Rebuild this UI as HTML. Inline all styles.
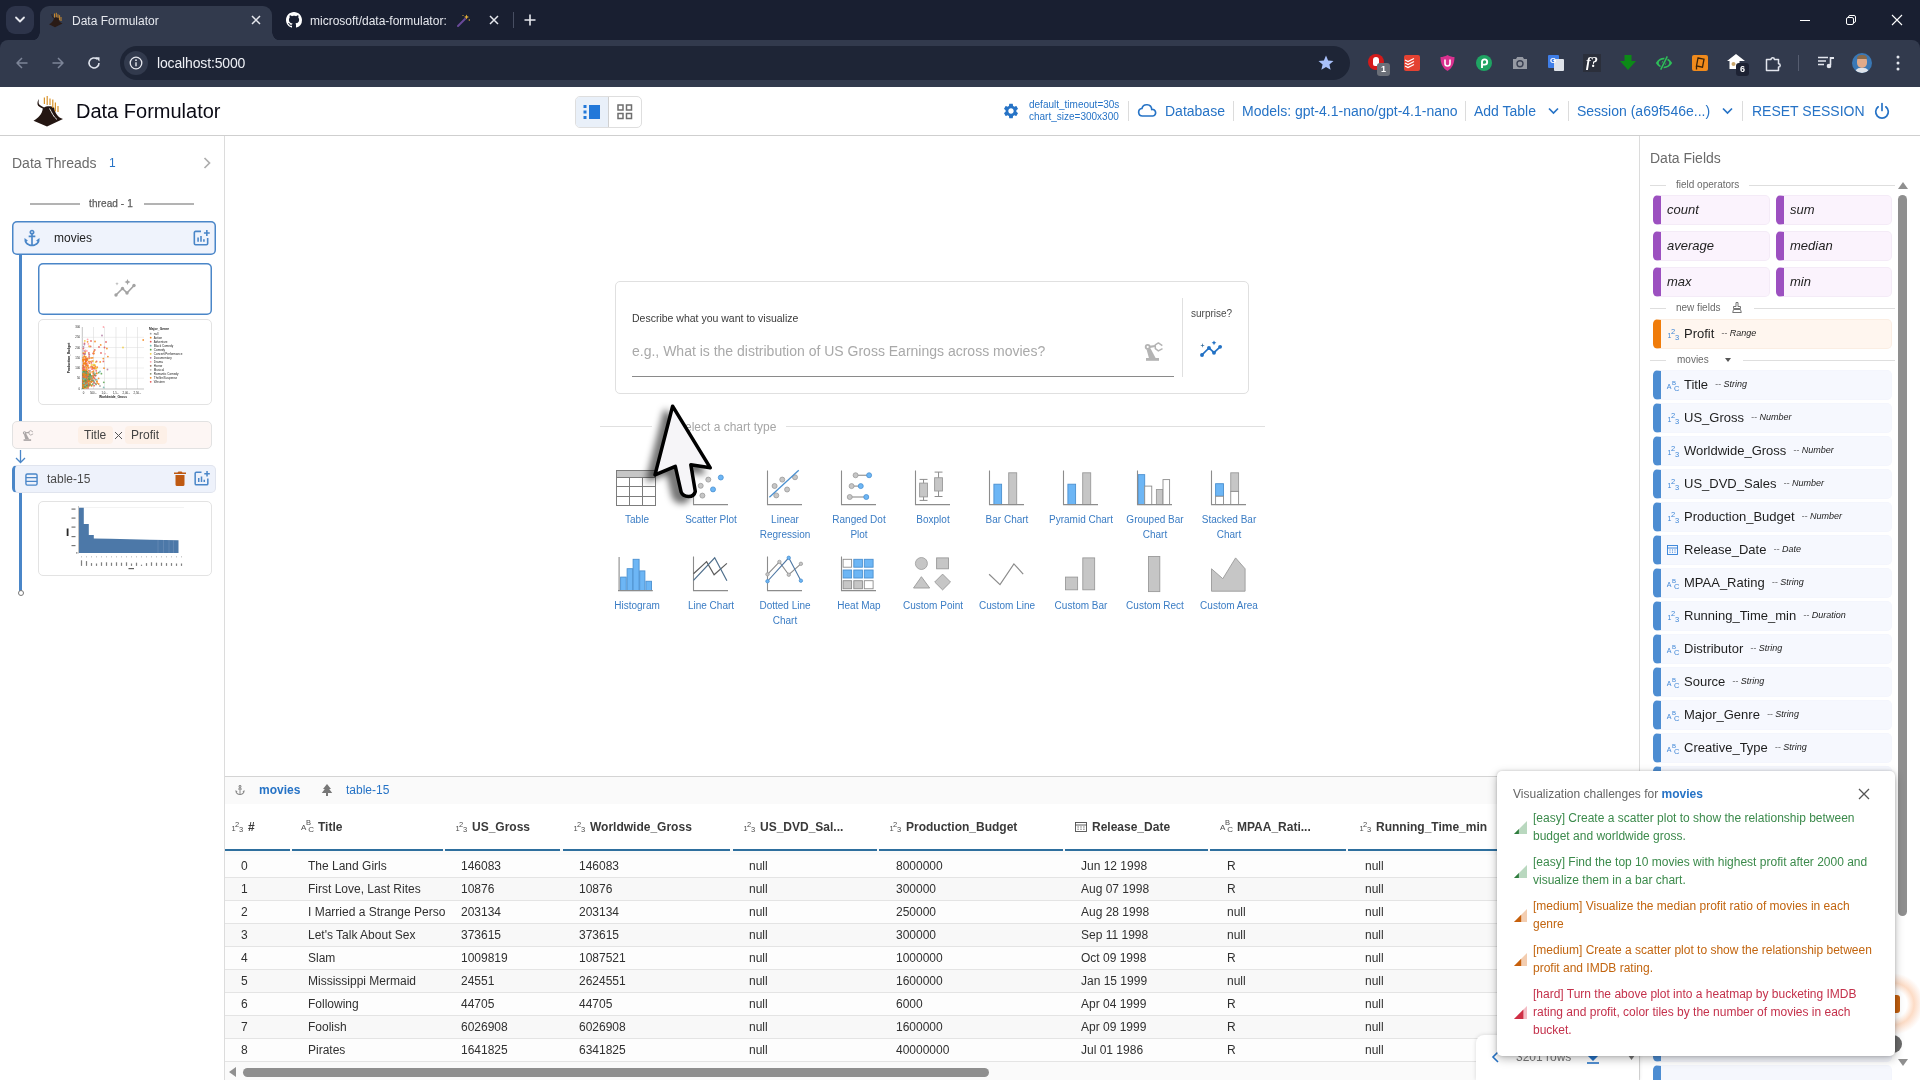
<!DOCTYPE html>
<html lang="en">
<head>
<meta charset="utf-8">
<title>Data Formulator</title>
<style>
*{box-sizing:border-box;margin:0;padding:0}
html,body{width:1920px;height:1080px;overflow:hidden;background:#fff;will-change:transform;font-family:"Liberation Sans",sans-serif;color:#222}
.a{position:absolute}
.t{position:absolute;white-space:nowrap}
svg{position:absolute;overflow:visible}
/* ---------- browser chrome ---------- */
#tabstrip{left:0;top:0;width:1920px;height:60px;background:#191f31}
#toolbar{left:0;top:40px;width:1920px;height:47px;background:#323a4d;border-radius:8px 8px 0 0}
#tab1{left:40px;top:6px;width:232px;height:35px;background:#323a4d;border-radius:9px 9px 0 0}
#tab1:before,#tab1:after{content:"";position:absolute;bottom:0;width:9px;height:9px}
#tab1:before{left:-9px;background:radial-gradient(circle at 0 0,rgba(0,0,0,0) 8.5px,#323a4d 9px)}
#tab1:after{right:-9px;background:radial-gradient(circle at 100% 0,rgba(0,0,0,0) 8.5px,#323a4d 9px)}
#tabsearch{left:6px;top:6px;width:28px;height:28px;border-radius:9px;background:#2d344a}
#urlbar{left:120px;top:46px;width:1230px;height:34px;border-radius:17px;background:#1e2536}
#infoc{left:124px;top:51px;width:24px;height:24px;border-radius:12px;background:#323a4d}
.ct{color:#e6e8ee;font-size:12px;line-height:16px}
/* ---------- app header ---------- */
#hdr{left:0;top:87px;width:1920px;height:49px;background:#fff;border-bottom:1px solid #cfcfcf}
.hb{color:#2673c6;font-size:14px;line-height:20px;top:101px}
.hdiv{width:1px;height:20px;top:101px;background:#dcdcdc}
/* ---------- panels ---------- */
#left{left:0;top:136px;width:225px;height:944px;background:#fff;border-right:1px solid #dcdcdc}
#right{left:1639px;top:136px;width:281px;height:944px;background:#fff;border-left:1px solid #dcdcdc}
#bottom{left:225px;top:776px;width:1414px;height:304px;background:#fafafa;border-top:1px solid #d4d4d4}
.cl{width:90px;text-align:center;font-size:10px;line-height:15px;color:#3a7cc4;white-space:normal}
</style>
</head>
<body>
<!-- ================= BROWSER CHROME ================= -->
<div class="a" id="tabstrip"></div>
<div class="a" id="toolbar"></div>
<div class="a" id="tabsearch"></div>
<svg style="left:14px;top:15px" width="12" height="10" viewBox="0 0 12 10"><path d="M2 2.5 L6 6.5 L10 2.5" fill="none" stroke="#e6e8ee" stroke-width="1.8" stroke-linecap="round" stroke-linejoin="round"/></svg>
<div class="a" id="tab1"></div>
<!-- tab 1 -->
<svg style="left:48px;top:12px" width="16" height="16" viewBox="0 0 16 16"><path d="M3.5 2 C3.5 5 5 6 6 6.5 C5.5 9 3.5 11 1 12.2 L7 15.2 L14.5 11.5 C11.5 10.5 10.6 8 10.5 6 C9.8 5.2 7 5 6.2 6 C5 5 4.2 4 4.2 2 Z" fill="#2a1b16"/><path d="M6.5 1.5v4M8.3 0.8v4.5M10 2.3v3.5M11.6 3.2v5M13 5v4" stroke="#d9922a" stroke-width="0.9" fill="none"/></svg>
<div class="t ct" style="left:72px;top:13px">Data Formulator</div>
<svg style="left:251px;top:15px" width="10" height="10" viewBox="0 0 10 10"><path d="M1 1L9 9M9 1L1 9" stroke="#e6e8ee" stroke-width="1.5" fill="none"/></svg>
<!-- tab 2 -->
<svg style="left:286px;top:12px" width="16" height="16" viewBox="0 0 16 16"><path fill="#fff" d="M8 0C3.58 0 0 3.58 0 8c0 3.54 2.29 6.53 5.47 7.59.4.07.55-.17.55-.38 0-.19-.01-.82-.01-1.49-2.01.37-2.53-.49-2.69-.94-.09-.23-.48-.94-.82-1.13-.28-.15-.68-.52-.01-.53.63-.01 1.08.58 1.23.82.72 1.21 1.87.87 2.33.66.07-.52.28-.87.51-1.07-1.78-.2-3.64-.89-3.64-3.95 0-.87.31-1.59.82-2.15-.08-.2-.36-1.02.08-2.12 0 0 .67-.21 2.2.82.64-.18 1.32-.27 2-.27s1.36.09 2 .27c1.53-1.04 2.2-.82 2.2-.82.44 1.1.16 1.92.08 2.12.51.56.82 1.27.82 2.15 0 3.07-1.87 3.75-3.65 3.95.29.25.54.73.54 1.48 0 1.07-.01 1.93-.01 2.2 0 .21.15.46.55.38A8.01 8.01 0 0016 8c0-4.42-3.58-8-8-8z"/></svg>
<div class="t ct" style="left:310px;top:13px">microsoft/data-formulator:</div>
<svg style="left:457px;top:13px" width="14" height="14" viewBox="0 0 14 14"><path d="M1 13L8 6" stroke="#6a4a9a" stroke-width="2" stroke-linecap="round"/><path d="M9.5 1.5l.7 1.8 1.8.7-1.8.7-.7 1.8-.7-1.800-1.800-.7 1.800-.7z" fill="#e8b23a"/><circle cx="12.300" cy="7" r=".7" fill="#e8b23a"/><circle cx="6" cy="2.500" r=".6" fill="#e8b23a"/></svg>
<svg style="left:489px;top:15px" width="10" height="10" viewBox="0 0 10 10"><path d="M1 1L9 9M9 1L1 9" stroke="#e6e8ee" stroke-width="1.500" fill="none"/></svg>
<div class="a" style="left:513px;top:12px;width:1px;height:16px;background:#474e62"></div>
<svg style="left:524px;top:14px" width="12" height="12" viewBox="0 0 12 12"><path d="M6 .5v11M.5 6h11" stroke="#e6e8ee" stroke-width="1.600" fill="none"/></svg>
<!-- window controls -->
<svg style="left:1800px;top:15px" width="10" height="10" viewBox="0 0 10 10"><path d="M0 5.500h10" stroke="#fff" stroke-width="1"/></svg>
<svg style="left:1846px;top:15px" width="10" height="10" viewBox="0 0 10 10"><rect x=".5" y="2.500" width="7" height="7" rx="1.500" fill="none" stroke="#fff" stroke-width="1"/><path d="M2.500 2.500V2a1.500 1.500 0 011.500-1.500h4A1.500 1.500 0 019.500 2v4A1.500 1.500 0 018 7.500h-.5" fill="none" stroke="#fff" stroke-width="1"/></svg>
<svg style="left:1892px;top:15px" width="10" height="10" viewBox="0 0 10 10"><path d="M0 0L10 10M10 0L0 10" stroke="#fff" stroke-width="1.100" fill="none"/></svg>
<!-- nav -->
<svg style="left:16px;top:57px" width="12" height="12" viewBox="0 0 12 12"><path d="M11.500 6H1M6 1L1 6l5 5" fill="none" stroke="#7d8598" stroke-width="1.500" stroke-linejoin="round"/></svg>
<svg style="left:52px;top:57px" width="12" height="12" viewBox="0 0 12 12"><path d="M.5 6H11M6 1l5 5-5 5" fill="none" stroke="#7d8598" stroke-width="1.500" stroke-linejoin="round"/></svg>
<svg style="left:87px;top:56px" width="14" height="14" viewBox="0 0 14 14"><path d="M12 7A5 5 0 1 1 10.300 3.200" fill="none" stroke="#dfe3ec" stroke-width="1.600"/><path d="M8.200 1.200h4.300v4.300z" fill="#dfe3ec"/></svg>
<!--CHROME-ICONS-->
<div class="a" id="urlbar"></div>
<div class="a" id="infoc"></div>
<svg style="left:129px;top:56px" width="14" height="14" viewBox="0 0 14 14"><circle cx="7" cy="7" r="5.800" fill="none" stroke="#e6e8ee" stroke-width="1.300"/><path d="M7 6.200v4" stroke="#e6e8ee" stroke-width="1.400"/><circle cx="7" cy="4.200" r=".9" fill="#e6e8ee"/></svg>
<div class="t" style="left:157px;top:53px;font-size:14px;line-height:20px;color:#eef0f5;letter-spacing:-.15px">localhost:5000</div>
<svg style="left:1317px;top:54px" width="18" height="18" viewBox="0 0 24 24"><path fill="#a8c0fa" d="M12 17.270L18.180 21l-1.640-7.030L22 9.240l-7.190-.61L12 2 9.190 8.630 2 9.240l5.460 4.730L5.820 21z"/></svg>
<!-- extensions -->
<div class="a" style="left:1368px;top:54px;width:16px;height:16px;border-radius:8px;background:#d41a1a"></div>
<div class="a" style="left:1373px;top:57px;width:6px;height:9px;border-radius:3px 3px 2px 2px;background:#fff"></div>
<div class="a" style="left:1377px;top:63px;width:13px;height:13px;border-radius:3px;background:#6b6f78;color:#fff;font-size:9px;font-weight:bold;line-height:13px;text-align:center">1</div>
<div class="a" style="left:1404px;top:55px;width:16px;height:16px;border-radius:2px;background:#e44232"></div>
<svg style="left:1405px;top:57px" width="12" height="12" viewBox="0 0 12 12"><path d="M0 3l3 1.500L9 1.500M0 6l3 1.500L9 4.500M0 9l3 1.500L9 7.500" fill="none" stroke="#fff" stroke-width="1.200"/></svg>
<svg style="left:1440px;top:55px" width="15" height="16" viewBox="0 0 15 16"><path d="M7.500 0C5 1.500 2.500 2 .5 2c0 6 2 11 7 14 5-3 7-8 7-14-2 0-4.500-.5-7-2z" fill="#d9318f"/><path d="M5 4.500v4a2.500 2.500 0 005 0v-4" fill="none" stroke="#fff" stroke-width="1.600"/></svg>
<div class="a" style="left:1476px;top:55px;width:16px;height:16px;border-radius:8px;background:#1fa463"></div>
<svg style="left:1476px;top:55px" width="16" height="16" viewBox="0 0 16 16"><path d="M6 13V7a2.600 2.600 0 112.600 2.600H6.500" fill="none" stroke="#fff" stroke-width="1.900"/></svg>
<svg style="left:1512px;top:56px" width="16" height="14" viewBox="0 0 16 14"><path d="M1 3h3l1.200-2h5.600L12 3h3v10H1z" fill="#9599a3"/><circle cx="8" cy="7.800" r="3" fill="none" stroke="#3a4052" stroke-width="1.400"/></svg>
<div class="a" style="left:1548px;top:55px;width:11px;height:13px;border-radius:1px;background:#3f7ee8"></div>
<div class="a" style="left:1554px;top:59px;width:10px;height:12px;border-radius:1px;background:#dfe3ea"></div>
<div class="t" style="left:1550px;top:56px;font-size:8px;line-height:10px;font-weight:bold;color:#fff">G</div>
<div class="a" style="left:1583px;top:54px;width:18px;height:18px;background:#2b2f3b"></div>
<div class="t" style="left:1586px;top:54px;font-family:'Liberation Serif',serif;font-style:italic;font-weight:bold;font-size:14px;line-height:18px;color:#fff">f?</div>
<svg style="left:1620px;top:55px" width="16" height="16" viewBox="0 0 16 16"><path d="M4.500 0h7v6H16l-8 9-8-9h4.500z" fill="#0c8a17"/></svg>
<svg style="left:1655px;top:56px" width="18" height="14" viewBox="0 0 18 14"><path d="M.8 7c2-3.400 5-5.200 8.200-5.200s6.200 1.800 8.200 5.200c-2 3.400-5 5.200-8.200 5.200S2.800 10.400.8 7z" fill="#2ebd59"/><ellipse cx="9" cy="7" rx="5.300" ry="3.400" fill="#323a4d"/><circle cx="9" cy="7" r="2.300" fill="#2ebd59"/><path d="M12.300 .3L5.700 13.700" stroke="#323a4d" stroke-width="3.200"/><path d="M12.300 .3L5.700 13.700" stroke="#2ebd59" stroke-width="1.500"/></svg>
<div class="a" style="left:1692px;top:55px;width:16px;height:16px;border-radius:2px;background:#f08a1c"></div>
<svg style="left:1695px;top:57px" width="11" height="13" viewBox="0 0 11 13"><path d="M3 1l6 1.200-1.500 8L1.500 9z" fill="none" stroke="#3a230a" stroke-width="1.300"/><path d="M1.500 9v3.500" stroke="#3a230a" stroke-width="1.300"/></svg>
<svg style="left:1727px;top:54px" width="18" height="16" viewBox="0 0 18 16"><path d="M9 0L0 7h2.500v8h10V7H18z" fill="#fff"/><circle cx="6.500" cy="10" r="2" fill="#c9a66b"/></svg>
<div class="a" style="left:1736px;top:63px;width:13px;height:13px;border-radius:3px;background:#1d2233;color:#fff;font-size:9px;font-weight:bold;line-height:13px;text-align:center">6</div>
<svg style="left:1764px;top:54px" width="18" height="18" viewBox="0 0 18 18"><path d="M2.500 5.500H7a1.700 1.700 0 013.400 0H14.500V9.700a1.700 1.700 0 010 3.400V16.500H2.500z" fill="none" stroke="#e3e6ee" stroke-width="1.500" stroke-linejoin="round"/></svg>
<div class="a" style="left:1798px;top:55px;width:1px;height:16px;background:#565d70"></div>
<svg style="left:1818px;top:56px" width="16" height="13" viewBox="0 0 16 13"><path d="M0 1.500h10M0 5h8M0 8.500h6" stroke="#e3e6ee" stroke-width="1.600"/><path d="M12.500 1v8" stroke="#e3e6ee" stroke-width="1.600"/><path d="M12.500 1h3.500v2h-3.500z" fill="#e3e6ee"/><circle cx="11" cy="10" r="2.300" fill="#e3e6ee"/></svg>
<div class="a" style="left:1852px;top:53px;width:20px;height:20px;border-radius:10px;background:#3a78b5;overflow:hidden"><div class="a" style="left:5px;top:3px;width:10px;height:12px;border-radius:5px;background:#e0aa8a"></div><div class="a" style="left:5px;top:2px;width:10px;height:4px;border-radius:5px 5px 0 0;background:#8a6a4a"></div><div class="a" style="left:3px;top:15px;width:14px;height:8px;border-radius:5px 5px 0 0;background:#dfe3ea"></div></div>
<svg style="left:1896px;top:55px" width="4" height="16" viewBox="0 0 4 16"><circle cx="2" cy="2" r="1.500" fill="#e3e6ee"/><circle cx="2" cy="8" r="1.500" fill="#e3e6ee"/><circle cx="2" cy="14" r="1.500" fill="#e3e6ee"/></svg>
<!--URL-ICONS-->

<!-- ================= APP HEADER ================= -->
<div class="a" id="hdr"></div>
<!-- logo -->
<svg style="left:32px;top:95px" width="32" height="32" viewBox="0 0 32 32"><path d="M6.500 4c-.4 1.500-1.300 3.200-1 5.200.3 2.300 3 3.200 5.300 4.300-.6 5.500-4.800 9.800-9.300 12.300L15 31.500 31 24c-5-1.200-8.200-6-8.800-11.200-1.600-2-8-2.200-10.200-.2-1.400-1.200-4.800-2-5.300-4.300-.3-1.300.2-2.700-.2-4.300z" fill="#241612"/><path d="M17.500 13.500c2.500 4 3.500 8 7.500 11" stroke="#fff" stroke-width=".9" fill="none"/><path d="M12.400 2.500v6.500M15.200 1v9M18 3.500v6.500M20.800 4.500v8.500M23.400 7.500v9M26 11v6" stroke="#d9932b" stroke-width="1.200" fill="none"/></svg>
<div class="t" style="left:76px;top:97px;font-size:20px;line-height:28px;color:#0a0a14">Data Formulator</div>
<!-- toggle group -->
<div class="a" style="left:575px;top:96px;width:67px;height:32px;border:1px solid #dedede;border-radius:5px;background:#fff"></div>
<div class="a" style="left:576px;top:97px;width:32px;height:30px;border-radius:4px 0 0 4px;background:#e9f0f9"></div>
<div class="a" style="left:608px;top:97px;width:1px;height:30px;background:#d0d0d0"></div>
<svg style="left:583px;top:105px" width="18" height="14" viewBox="0 0 18 14"><rect x="6" y="0" width="11" height="14" fill="#2278d9"/><rect x="0.500" y="0" width="3" height="3" fill="#2278d9"/><rect x="0.500" y="5.500" width="3" height="3" fill="#2278d9"/><rect x="0.500" y="11" width="3" height="3" fill="#2278d9"/></svg>
<svg style="left:617px;top:104px" width="16" height="16" viewBox="0 0 16 16"><g fill="none" stroke="#6e6e6e" stroke-width="1.500"><rect x="1" y="1" width="5" height="5"/><rect x="9.500" y="1" width="5" height="5"/><rect x="1" y="9.500" width="5" height="5"/><rect x="9.500" y="9.500" width="5" height="5"/></g></svg>
<!-- right controls -->
<svg style="left:1002px;top:102px" width="18" height="18" viewBox="0 0 24 24"><path fill="#2673c6" d="M19.140 12.940c.04-.3.060-.61.060-.94 0-.32-.02-.64-.07-.94l2.030-1.580c.18-.14.230-.41.120-.61l-1.920-3.320c-.12-.22-.37-.29-.59-.22l-2.390.96c-.5-.38-1.030-.7-1.620-.94l-.36-2.540c-.04-.24-.24-.41-.48-.41h-3.840c-.24 0-.43.170-.47.410l-.36 2.540c-.59.240-1.130.57-1.620.94l-2.390-.96c-.22-.08-.47 0-.59.220L2.740 8.870c-.12.210-.08.470.12.610l2.030 1.580c-.05.300-.09.630-.09.940s.02.640.07.940l-2.030 1.580c-.18.140-.23.410-.12.610l1.920 3.320c.12.220.37.290.59.220l2.390-.96c.5.380 1.030.7 1.620.94l.36 2.540c.05.240.24.410.48.410h3.840c.24 0 .44-.17.470-.41l.36-2.540c.59-.24 1.130-.56 1.620-.94l2.390.96c.22.080.47 0 .59-.22l1.920-3.320c.12-.22.070-.47-.12-.61l-2.010-1.580zM12 15.600c-1.980 0-3.600-1.620-3.600-3.600s1.620-3.600 3.600-3.600 3.600 1.620 3.600 3.600-1.620 3.600-3.600 3.600z"/></svg>
<div class="t" style="left:1029px;top:99px;font-size:10px;line-height:12px;color:#2673c6">default_timeout=30s<br>chart_size=300x300</div>
<div class="a hdiv" style="left:1128px"></div>
<svg style="left:1136px;top:101px" width="22" height="20" viewBox="0 0 24 24"><path fill="none" stroke="#2673c6" stroke-width="2" d="M19 18H6.500a4.500 4.500 0 01-.6-8.960A6 6 0 0117.700 10.100 4 4 0 0119 18z"/></svg>
<div class="t hb" style="left:1165px">Database</div>
<div class="a hdiv" style="left:1233px"></div>
<div class="t hb" style="left:1242px">Models: gpt-4.1-nano/gpt-4.1-nano</div>
<div class="a hdiv" style="left:1465px"></div>
<div class="t hb" style="left:1474px">Add Table</div>
<svg style="left:1548px;top:107px" width="11" height="8" viewBox="0 0 11 8"><path d="M1 1.500l4.500 4.500L10 1.500" fill="none" stroke="#2673c6" stroke-width="1.700"/></svg>
<div class="a hdiv" style="left:1568px"></div>
<div class="t hb" style="left:1577px">Session (a69f546e...)</div>
<svg style="left:1722px;top:107px" width="11" height="8" viewBox="0 0 11 8"><path d="M1 1.500l4.500 4.500L10 1.500" fill="none" stroke="#2673c6" stroke-width="1.700"/></svg>
<div class="a hdiv" style="left:1742px"></div>
<div class="t hb" style="left:1752px">RESET SESSION</div>
<svg style="left:1873px;top:102px" width="18" height="18" viewBox="0 0 18 18"><path d="M5.200 4.800a6.300 6.300 0 107.600 0" fill="none" stroke="#2673c6" stroke-width="1.700" stroke-linecap="round"/><path d="M9 1.500v7" stroke="#2673c6" stroke-width="1.700" stroke-linecap="round"/></svg>
<!--HEADER-->

<!-- ================= PANELS ================= -->
<div class="a" id="left"></div>
<div class="a" id="right"></div>
<div class="a" id="bottom"></div>
<!--LEFT-BEGIN-->
<div class="t" style="left:12px;top:153px;font-size:14px;line-height:20px;color:#6b6b6b">Data Threads</div>
<div class="t" style="left:109px;top:153px;font-size:12px;line-height:20px;color:#2673c6">1</div>
<svg style="left:203px;top:157px" width="8" height="12" viewBox="0 0 8 12"><path d="M1.500 1l5 5-5 5" fill="none" stroke="#adadad" stroke-width="1.700"/></svg>
<div class="a" style="left:30px;top:203px;width:50px;height:2px;background:#b3b3b3"></div>
<div class="a" style="left:144px;top:203px;width:50px;height:2px;background:#b3b3b3"></div>
<div class="t" style="left:89px;top:197px;font-size:10px;line-height:14px;color:#5c5c5c;letter-spacing:.1px;-webkit-text-stroke:.25px #5c5c5c">thread - 1</div>
<div class="a" style="left:19px;top:252px;width:3px;height:170px;background:#4a86c8"></div>
<div class="a" style="left:19px;top:490px;width:3px;height:101px;background:#4a86c8"></div>
<div class="a" style="left:17.500px;top:590px;width:6px;height:6px;border-radius:3px;border:1px solid #777;background:#fff"></div>
<div class="a" style="left:12px;top:221px;width:204px;height:34px;border-radius:5px;background:#eff3fc;box-shadow:inset 0 0 0 1.500px #4a86c8"></div>
<svg style="left:22px;top:228px" width="20" height="20" viewBox="0 0 24 24"><path fill="#4a86c8" d="M17 15l1.550 1.550c-.96 1.690-3.330 3.040-5.550 3.370V11h3V9h-3V7.820C14.160 7.400 15 6.300 15 5c0-1.650-1.350-3-3-3S9 3.350 9 5c0 1.300.84 2.400 2 2.820V9H8v2h3v8.920c-2.220-.33-4.590-1.680-5.550-3.370L7 15l-4-3v3c0 3.880 4.920 7 9 7s9-3.120 9-7v-3l-4 3zM12 4c.55 0 1 .45 1 1s-.45 1-1 1-1-.45-1-1 .45-1 1-1z"/></svg>
<div class="t" style="left:54px;top:230px;font-size:12px;line-height:16px;color:#222">movies</div>
<svg style="left:191px;top:228px" width="20" height="20" viewBox="0 0 24 24"><path fill="none" stroke="#4a86c8" stroke-width="1.900" d="M12 4H5.500A1.500 1.500 0 004 5.500v13A1.500 1.500 0 005.500 20h13a1.500 1.500 0 001.500-1.500V12"/><path stroke="#4a86c8" stroke-width="1.900" fill="none" d="M8.500 16.500v-5M12 16.500v-7M15.500 16.500v-3M19 2.500v7M15.500 6h7"/></svg>
<div class="a" style="left:38px;top:263px;width:174px;height:52px;border-radius:5px;background:#fff;box-shadow:inset 0 0 0 1.500px #4a86c8"></div>
<svg style="left:114px;top:279px" width="22" height="20" viewBox="0 0 22 20"><path d="M2 16l6.500-6.500 4.500 4.500L20 6.500" fill="none" stroke="#a3a3a3" stroke-width="1.700" stroke-linejoin="round"/><circle cx="2" cy="16" r="1.700" fill="#a3a3a3"/><circle cx="8.500" cy="9.500" r="1.700" fill="#a3a3a3"/><circle cx="13" cy="14" r="1.700" fill="#a3a3a3"/><circle cx="20" cy="6.500" r="1.700" fill="#a3a3a3"/><path d="M13.500 0l.9 2.100 2.100.9-2.100.9-.9 2.100-.9-2.100-2.100-.9 2.100-.9z" fill="#a3a3a3"/><path d="M3 3l.5 1.200 1.200.5-1.200.5L3 6.400l-.5-1.200-1.200-.5 1.200-.5z" fill="#b5b5b5"/></svg>
<div class="a" style="left:38px;top:319px;width:174px;height:86px;border:1px solid #e3e3e3;border-radius:5px;background:#fff"></div>
<svg style="left:38px;top:319px" width="174" height="86" viewBox="38 319 174 86"><path d="M82.3 327V389" stroke="#9a9a9a" stroke-width=".6"/><path d="M93.5 327V389" stroke="#dcdcdc" stroke-width=".6"/><path d="M104.5 327V389" stroke="#dcdcdc" stroke-width=".6"/><path d="M116 327V389" stroke="#dcdcdc" stroke-width=".6"/><path d="M126.5 327V389" stroke="#dcdcdc" stroke-width=".6"/><path d="M137.5 327V389" stroke="#dcdcdc" stroke-width=".6"/><path d="M81 337.3H144" stroke="#dcdcdc" stroke-width=".5"/><path d="M81 347.5H144" stroke="#dcdcdc" stroke-width=".5"/><path d="M81 357.7H144" stroke="#dcdcdc" stroke-width=".5"/><path d="M81 368H144" stroke="#dcdcdc" stroke-width=".5"/><path d="M81 378.2H144" stroke="#dcdcdc" stroke-width=".5"/><path d="M81 389H144" stroke="#9a9a9a" stroke-width=".6"/><circle cx="84.5" cy="385.2" r=".9" fill="#54a24b" fill-opacity=".85"/><circle cx="89.8" cy="382.0" r=".9" fill="#72b7b2" fill-opacity=".85"/><circle cx="83.9" cy="386.8" r=".9" fill="#8a8f6a" fill-opacity=".85"/><circle cx="83.3" cy="381.8" r=".9" fill="#54a24b" fill-opacity=".85"/><circle cx="94.7" cy="368.4" r=".9" fill="#f58518" fill-opacity=".85"/><circle cx="86.3" cy="378.4" r=".9" fill="#54a24b" fill-opacity=".85"/><circle cx="86.2" cy="385.0" r=".9" fill="#72b7b2" fill-opacity=".85"/><circle cx="83.4" cy="383.7" r=".9" fill="#8a8f6a" fill-opacity=".85"/><circle cx="83.3" cy="378.9" r=".9" fill="#54a24b" fill-opacity=".85"/><circle cx="86.1" cy="387.3" r=".9" fill="#8a8f6a" fill-opacity=".85"/><circle cx="85.6" cy="377.2" r=".9" fill="#f58518" fill-opacity=".85"/><circle cx="86.4" cy="380.3" r=".9" fill="#8a8f6a" fill-opacity=".85"/><circle cx="87.7" cy="381.6" r=".9" fill="#72b7b2" fill-opacity=".85"/><circle cx="85.6" cy="382.1" r=".9" fill="#72b7b2" fill-opacity=".85"/><circle cx="98.6" cy="378.4" r=".9" fill="#f58518" fill-opacity=".85"/><circle cx="83.6" cy="380.9" r=".9" fill="#e45756" fill-opacity=".85"/><circle cx="83.2" cy="379.0" r=".9" fill="#f58518" fill-opacity=".85"/><circle cx="84.6" cy="382.5" r=".9" fill="#f58518" fill-opacity=".85"/><circle cx="83.2" cy="387.1" r=".9" fill="#e45756" fill-opacity=".85"/><circle cx="87.3" cy="383.6" r=".9" fill="#e45756" fill-opacity=".85"/><circle cx="86.4" cy="373.7" r=".9" fill="#e45756" fill-opacity=".85"/><circle cx="84.8" cy="376.1" r=".9" fill="#f58518" fill-opacity=".85"/><circle cx="84.7" cy="376.8" r=".9" fill="#8a8f6a" fill-opacity=".85"/><circle cx="88.7" cy="384.9" r=".9" fill="#f58518" fill-opacity=".85"/><circle cx="92.8" cy="378.6" r=".9" fill="#f58518" fill-opacity=".85"/><circle cx="86.1" cy="361.3" r=".9" fill="#e45756" fill-opacity=".85"/><circle cx="84.2" cy="381.8" r=".9" fill="#f58518" fill-opacity=".85"/><circle cx="95.6" cy="383.6" r=".9" fill="#8a8f6a" fill-opacity=".85"/><circle cx="87.2" cy="383.5" r=".9" fill="#8a8f6a" fill-opacity=".85"/><circle cx="84.1" cy="387.6" r=".9" fill="#f58518" fill-opacity=".85"/><circle cx="86.7" cy="383.5" r=".9" fill="#72b7b2" fill-opacity=".85"/><circle cx="94.9" cy="365.1" r=".9" fill="#eeca3b" fill-opacity=".85"/><circle cx="92.1" cy="361.2" r=".9" fill="#e45756" fill-opacity=".85"/><circle cx="84.9" cy="382.4" r=".9" fill="#e45756" fill-opacity=".85"/><circle cx="84.9" cy="383.4" r=".9" fill="#f58518" fill-opacity=".85"/><circle cx="83.6" cy="383.7" r=".9" fill="#54a24b" fill-opacity=".85"/><circle cx="86.2" cy="375.7" r=".9" fill="#72b7b2" fill-opacity=".85"/><circle cx="83.0" cy="365.4" r=".9" fill="#f58518" fill-opacity=".85"/><circle cx="86.9" cy="350.9" r=".9" fill="#ff9da6" fill-opacity=".85"/><circle cx="83.4" cy="366.8" r=".9" fill="#eeca3b" fill-opacity=".85"/><circle cx="85.5" cy="383.7" r=".9" fill="#e45756" fill-opacity=".85"/><circle cx="84.6" cy="383.1" r=".9" fill="#8a8f6a" fill-opacity=".85"/><circle cx="85.8" cy="382.2" r=".9" fill="#f58518" fill-opacity=".85"/><circle cx="83.5" cy="379.7" r=".9" fill="#72b7b2" fill-opacity=".85"/><circle cx="84.3" cy="376.8" r=".9" fill="#f58518" fill-opacity=".85"/><circle cx="85.8" cy="360.7" r=".9" fill="#f58518" fill-opacity=".85"/><circle cx="85.9" cy="370.4" r=".9" fill="#f58518" fill-opacity=".85"/><circle cx="86.7" cy="367.5" r=".9" fill="#f58518" fill-opacity=".85"/><circle cx="89.5" cy="363.2" r=".9" fill="#f58518" fill-opacity=".85"/><circle cx="83.8" cy="380.0" r=".9" fill="#54a24b" fill-opacity=".85"/><circle cx="89.1" cy="379.7" r=".9" fill="#72b7b2" fill-opacity=".85"/><circle cx="95.4" cy="366.5" r=".9" fill="#f58518" fill-opacity=".85"/><circle cx="95.3" cy="379.8" r=".9" fill="#8a8f6a" fill-opacity=".85"/><circle cx="85.4" cy="382.2" r=".9" fill="#72b7b2" fill-opacity=".85"/><circle cx="90.2" cy="374.9" r=".9" fill="#e45756" fill-opacity=".85"/><circle cx="83.3" cy="376.0" r=".9" fill="#e45756" fill-opacity=".85"/><circle cx="88.4" cy="379.9" r=".9" fill="#e45756" fill-opacity=".85"/><circle cx="84.5" cy="368.5" r=".9" fill="#eeca3b" fill-opacity=".85"/><circle cx="85.4" cy="373.1" r=".9" fill="#8a8f6a" fill-opacity=".85"/><circle cx="83.6" cy="386.7" r=".9" fill="#f58518" fill-opacity=".85"/><circle cx="89.5" cy="379.5" r=".9" fill="#f58518" fill-opacity=".85"/><circle cx="87.2" cy="380.5" r=".9" fill="#8a8f6a" fill-opacity=".85"/><circle cx="83.0" cy="370.5" r=".9" fill="#f58518" fill-opacity=".85"/><circle cx="85.9" cy="356.8" r=".9" fill="#f58518" fill-opacity=".85"/><circle cx="89.9" cy="383.4" r=".9" fill="#f58518" fill-opacity=".85"/><circle cx="85.7" cy="371.3" r=".9" fill="#72b7b2" fill-opacity=".85"/><circle cx="85.1" cy="384.2" r=".9" fill="#f58518" fill-opacity=".85"/><circle cx="92.0" cy="366.7" r=".9" fill="#e45756" fill-opacity=".85"/><circle cx="85.1" cy="359.4" r=".9" fill="#e45756" fill-opacity=".85"/><circle cx="83.6" cy="379.7" r=".9" fill="#8a8f6a" fill-opacity=".85"/><circle cx="86.7" cy="371.1" r=".9" fill="#8a8f6a" fill-opacity=".85"/><circle cx="85.5" cy="372.2" r=".9" fill="#f58518" fill-opacity=".85"/><circle cx="87.5" cy="377.1" r=".9" fill="#54a24b" fill-opacity=".85"/><circle cx="91.5" cy="385.5" r=".9" fill="#54a24b" fill-opacity=".85"/><circle cx="88.8" cy="376.2" r=".9" fill="#54a24b" fill-opacity=".85"/><circle cx="85.2" cy="376.3" r=".9" fill="#72b7b2" fill-opacity=".85"/><circle cx="83.8" cy="384.1" r=".9" fill="#f58518" fill-opacity=".85"/><circle cx="85.7" cy="383.2" r=".9" fill="#f58518" fill-opacity=".85"/><circle cx="93.1" cy="361.0" r=".9" fill="#eeca3b" fill-opacity=".85"/><circle cx="83.5" cy="386.5" r=".9" fill="#54a24b" fill-opacity=".85"/><circle cx="87.3" cy="380.9" r=".9" fill="#f58518" fill-opacity=".85"/><circle cx="89.0" cy="362.1" r=".9" fill="#ff9da6" fill-opacity=".85"/><circle cx="87.0" cy="381.9" r=".9" fill="#8a8f6a" fill-opacity=".85"/><circle cx="96.6" cy="368.6" r=".9" fill="#eeca3b" fill-opacity=".85"/><circle cx="91.5" cy="378.8" r=".9" fill="#8a8f6a" fill-opacity=".85"/><circle cx="83.6" cy="381.6" r=".9" fill="#f58518" fill-opacity=".85"/><circle cx="85.1" cy="383.2" r=".9" fill="#f58518" fill-opacity=".85"/><circle cx="83.0" cy="379.4" r=".9" fill="#54a24b" fill-opacity=".85"/><circle cx="84.8" cy="379.5" r=".9" fill="#54a24b" fill-opacity=".85"/><circle cx="83.4" cy="360.6" r=".9" fill="#f58518" fill-opacity=".85"/><circle cx="83.3" cy="384.4" r=".9" fill="#8a8f6a" fill-opacity=".85"/><circle cx="84.2" cy="386.1" r=".9" fill="#e45756" fill-opacity=".85"/><circle cx="89.7" cy="383.7" r=".9" fill="#72b7b2" fill-opacity=".85"/><circle cx="86.3" cy="374.6" r=".9" fill="#54a24b" fill-opacity=".85"/><circle cx="89.3" cy="378.6" r=".9" fill="#f58518" fill-opacity=".85"/><circle cx="94.0" cy="365.6" r=".9" fill="#f58518" fill-opacity=".85"/><circle cx="86.6" cy="384.2" r=".9" fill="#54a24b" fill-opacity=".85"/><circle cx="85.3" cy="382.0" r=".9" fill="#f58518" fill-opacity=".85"/><circle cx="86.8" cy="384.2" r=".9" fill="#54a24b" fill-opacity=".85"/><circle cx="96.8" cy="381.7" r=".9" fill="#f58518" fill-opacity=".85"/><circle cx="86.9" cy="378.9" r=".9" fill="#f58518" fill-opacity=".85"/><circle cx="85.7" cy="384.9" r=".9" fill="#54a24b" fill-opacity=".85"/><circle cx="103.7" cy="387.4" r=".9" fill="#72b7b2" fill-opacity=".85"/><circle cx="86.1" cy="384.0" r=".9" fill="#f58518" fill-opacity=".85"/><circle cx="83.3" cy="369.3" r=".9" fill="#eeca3b" fill-opacity=".85"/><circle cx="86.1" cy="360.2" r=".9" fill="#f58518" fill-opacity=".85"/><circle cx="87.6" cy="341.8" r=".9" fill="#f58518" fill-opacity=".85"/><circle cx="85.0" cy="383.5" r=".9" fill="#8a8f6a" fill-opacity=".85"/><circle cx="83.0" cy="377.4" r=".9" fill="#f58518" fill-opacity=".85"/><circle cx="83.6" cy="386.5" r=".9" fill="#72b7b2" fill-opacity=".85"/><circle cx="87.3" cy="383.3" r=".9" fill="#f58518" fill-opacity=".85"/><circle cx="83.1" cy="386.0" r=".9" fill="#54a24b" fill-opacity=".85"/><circle cx="84.1" cy="350.8" r=".9" fill="#b279a2" fill-opacity=".85"/><circle cx="84.5" cy="386.1" r=".9" fill="#8a8f6a" fill-opacity=".85"/><circle cx="84.7" cy="387.4" r=".9" fill="#f58518" fill-opacity=".85"/><circle cx="84.2" cy="376.1" r=".9" fill="#54a24b" fill-opacity=".85"/><circle cx="83.3" cy="369.5" r=".9" fill="#e45756" fill-opacity=".85"/><circle cx="83.1" cy="388.0" r=".9" fill="#8a8f6a" fill-opacity=".85"/><circle cx="83.3" cy="353.1" r=".9" fill="#f58518" fill-opacity=".85"/><circle cx="87.2" cy="369.6" r=".9" fill="#eeca3b" fill-opacity=".85"/><circle cx="88.7" cy="370.6" r=".9" fill="#f58518" fill-opacity=".85"/><circle cx="88.1" cy="376.7" r=".9" fill="#e45756" fill-opacity=".85"/><circle cx="91.8" cy="369.0" r=".9" fill="#e45756" fill-opacity=".85"/><circle cx="83.5" cy="379.7" r=".9" fill="#54a24b" fill-opacity=".85"/><circle cx="89.9" cy="370.5" r=".9" fill="#ff9da6" fill-opacity=".85"/><circle cx="95.4" cy="375.6" r=".9" fill="#54a24b" fill-opacity=".85"/><circle cx="83.5" cy="383.3" r=".9" fill="#f58518" fill-opacity=".85"/><circle cx="86.2" cy="374.8" r=".9" fill="#e45756" fill-opacity=".85"/><circle cx="84.0" cy="384.3" r=".9" fill="#54a24b" fill-opacity=".85"/><circle cx="88.4" cy="376.8" r=".9" fill="#e45756" fill-opacity=".85"/><circle cx="85.9" cy="371.4" r=".9" fill="#54a24b" fill-opacity=".85"/><circle cx="90.4" cy="378.0" r=".9" fill="#8a8f6a" fill-opacity=".85"/><circle cx="88.3" cy="343.9" r=".9" fill="#ff9da6" fill-opacity=".85"/><circle cx="83.2" cy="361.6" r=".9" fill="#f58518" fill-opacity=".85"/><circle cx="86.7" cy="376.6" r=".9" fill="#8a8f6a" fill-opacity=".85"/><circle cx="84.5" cy="375.3" r=".9" fill="#72b7b2" fill-opacity=".85"/><circle cx="86.3" cy="387.9" r=".9" fill="#f58518" fill-opacity=".85"/><circle cx="97.3" cy="383.1" r=".9" fill="#f58518" fill-opacity=".85"/><circle cx="84.3" cy="379.5" r=".9" fill="#f58518" fill-opacity=".85"/><circle cx="84.4" cy="386.4" r=".9" fill="#f58518" fill-opacity=".85"/><circle cx="85.4" cy="366.4" r=".9" fill="#eeca3b" fill-opacity=".85"/><circle cx="103.3" cy="358.6" r=".9" fill="#f58518" fill-opacity=".85"/><circle cx="83.2" cy="387.0" r=".9" fill="#f58518" fill-opacity=".85"/><circle cx="95.1" cy="373.7" r=".9" fill="#72b7b2" fill-opacity=".85"/><circle cx="84.2" cy="386.4" r=".9" fill="#f58518" fill-opacity=".85"/><circle cx="92.0" cy="380.7" r=".9" fill="#54a24b" fill-opacity=".85"/><circle cx="94.9" cy="369.4" r=".9" fill="#ff9da6" fill-opacity=".85"/><circle cx="83.5" cy="383.4" r=".9" fill="#f58518" fill-opacity=".85"/><circle cx="82.9" cy="373.0" r=".9" fill="#54a24b" fill-opacity=".85"/><circle cx="94.1" cy="385.7" r=".9" fill="#e45756" fill-opacity=".85"/><circle cx="84.3" cy="382.5" r=".9" fill="#72b7b2" fill-opacity=".85"/><circle cx="83.2" cy="359.4" r=".9" fill="#f58518" fill-opacity=".85"/><circle cx="84.2" cy="386.6" r=".9" fill="#e45756" fill-opacity=".85"/><circle cx="93.9" cy="381.4" r=".9" fill="#72b7b2" fill-opacity=".85"/><circle cx="84.4" cy="370.4" r=".9" fill="#eeca3b" fill-opacity=".85"/><circle cx="91.5" cy="362.8" r=".9" fill="#e45756" fill-opacity=".85"/><circle cx="86.1" cy="374.1" r=".9" fill="#e45756" fill-opacity=".85"/><circle cx="85.0" cy="377.4" r=".9" fill="#f58518" fill-opacity=".85"/><circle cx="85.6" cy="359.7" r=".9" fill="#f58518" fill-opacity=".85"/><circle cx="85.5" cy="382.7" r=".9" fill="#e45756" fill-opacity=".85"/><circle cx="88.3" cy="373.8" r=".9" fill="#8a8f6a" fill-opacity=".85"/><circle cx="84.3" cy="378.6" r=".9" fill="#8a8f6a" fill-opacity=".85"/><circle cx="87.0" cy="384.8" r=".9" fill="#f58518" fill-opacity=".85"/><circle cx="86.1" cy="380.3" r=".9" fill="#f58518" fill-opacity=".85"/><circle cx="85.1" cy="378.9" r=".9" fill="#8a8f6a" fill-opacity=".85"/><circle cx="84.6" cy="386.7" r=".9" fill="#f58518" fill-opacity=".85"/><circle cx="89.5" cy="385.6" r=".9" fill="#f58518" fill-opacity=".85"/><circle cx="84.8" cy="372.7" r=".9" fill="#f58518" fill-opacity=".85"/><circle cx="84.6" cy="387.0" r=".9" fill="#f58518" fill-opacity=".85"/><circle cx="83.4" cy="380.2" r=".9" fill="#8a8f6a" fill-opacity=".85"/><circle cx="83.3" cy="363.1" r=".9" fill="#ff9da6" fill-opacity=".85"/><circle cx="85.3" cy="351.8" r=".9" fill="#e45756" fill-opacity=".85"/><circle cx="83.4" cy="381.7" r=".9" fill="#f58518" fill-opacity=".85"/><circle cx="96.7" cy="379.6" r=".9" fill="#72b7b2" fill-opacity=".85"/><circle cx="90.6" cy="346.4" r=".9" fill="#e45756" fill-opacity=".85"/><circle cx="83.9" cy="385.2" r=".9" fill="#54a24b" fill-opacity=".85"/><circle cx="94.3" cy="364.7" r=".9" fill="#eeca3b" fill-opacity=".85"/><circle cx="83.3" cy="371.8" r=".9" fill="#8a8f6a" fill-opacity=".85"/><circle cx="84.0" cy="359.6" r=".9" fill="#f58518" fill-opacity=".85"/><circle cx="96.0" cy="368.5" r=".9" fill="#eeca3b" fill-opacity=".85"/><circle cx="87.7" cy="386.6" r=".9" fill="#72b7b2" fill-opacity=".85"/><circle cx="94.4" cy="382.1" r=".9" fill="#72b7b2" fill-opacity=".85"/><circle cx="82.9" cy="379.8" r=".9" fill="#f58518" fill-opacity=".85"/><circle cx="95.7" cy="362.2" r=".9" fill="#eeca3b" fill-opacity=".85"/><circle cx="85.9" cy="379.5" r=".9" fill="#f58518" fill-opacity=".85"/><circle cx="87.8" cy="384.1" r=".9" fill="#f58518" fill-opacity=".85"/><circle cx="91.5" cy="375.9" r=".9" fill="#8a8f6a" fill-opacity=".85"/><circle cx="87.3" cy="358.5" r=".9" fill="#f58518" fill-opacity=".85"/><circle cx="87.7" cy="372.1" r=".9" fill="#f58518" fill-opacity=".85"/><circle cx="83.8" cy="369.9" r=".9" fill="#e45756" fill-opacity=".85"/><circle cx="83.2" cy="380.7" r=".9" fill="#8a8f6a" fill-opacity=".85"/><circle cx="83.9" cy="384.5" r=".9" fill="#f58518" fill-opacity=".85"/><circle cx="83.4" cy="377.2" r=".9" fill="#8a8f6a" fill-opacity=".85"/><circle cx="85.6" cy="361.6" r=".9" fill="#e45756" fill-opacity=".85"/><circle cx="83.5" cy="382.6" r=".9" fill="#72b7b2" fill-opacity=".85"/><circle cx="83.5" cy="387.7" r=".9" fill="#f58518" fill-opacity=".85"/><circle cx="85.3" cy="373.6" r=".9" fill="#54a24b" fill-opacity=".85"/><circle cx="106.9" cy="348.5" r=".9" fill="#f58518" fill-opacity=".85"/><circle cx="87.1" cy="377.5" r=".9" fill="#f58518" fill-opacity=".85"/><circle cx="87.3" cy="380.9" r=".9" fill="#f58518" fill-opacity=".85"/><circle cx="85.2" cy="386.8" r=".9" fill="#54a24b" fill-opacity=".85"/><circle cx="84.6" cy="353.8" r=".9" fill="#f58518" fill-opacity=".85"/><circle cx="84.8" cy="371.4" r=".9" fill="#f58518" fill-opacity=".85"/><circle cx="83.3" cy="374.8" r=".9" fill="#72b7b2" fill-opacity=".85"/><circle cx="93.0" cy="381.2" r=".9" fill="#f58518" fill-opacity=".85"/><circle cx="83.0" cy="382.4" r=".9" fill="#f58518" fill-opacity=".85"/><circle cx="83.1" cy="387.9" r=".9" fill="#54a24b" fill-opacity=".85"/><circle cx="84.1" cy="371.8" r=".9" fill="#f58518" fill-opacity=".85"/><circle cx="84.7" cy="381.6" r=".9" fill="#54a24b" fill-opacity=".85"/><circle cx="84.1" cy="373.9" r=".9" fill="#f58518" fill-opacity=".85"/><circle cx="84.3" cy="373.1" r=".9" fill="#e45756" fill-opacity=".85"/><circle cx="94.6" cy="375.0" r=".9" fill="#54a24b" fill-opacity=".85"/><circle cx="85.5" cy="350.5" r=".9" fill="#ff9da6" fill-opacity=".85"/><circle cx="89.1" cy="354.8" r=".9" fill="#f58518" fill-opacity=".85"/><circle cx="93.4" cy="375.1" r=".9" fill="#e45756" fill-opacity=".85"/><circle cx="84.3" cy="375.1" r=".9" fill="#8a8f6a" fill-opacity=".85"/><circle cx="84.5" cy="383.3" r=".9" fill="#72b7b2" fill-opacity=".85"/><circle cx="83.2" cy="385.6" r=".9" fill="#8a8f6a" fill-opacity=".85"/><circle cx="85.0" cy="375.5" r=".9" fill="#72b7b2" fill-opacity=".85"/><circle cx="84.5" cy="343.3" r=".9" fill="#e45756" fill-opacity=".85"/><circle cx="84.1" cy="387.2" r=".9" fill="#f58518" fill-opacity=".85"/><circle cx="100.7" cy="344.9" r=".9" fill="#f58518" fill-opacity=".85"/><circle cx="85.1" cy="375.8" r=".9" fill="#e45756" fill-opacity=".85"/><circle cx="86.0" cy="368.9" r=".9" fill="#f58518" fill-opacity=".85"/><circle cx="84.3" cy="378.4" r=".9" fill="#e45756" fill-opacity=".85"/><circle cx="84.1" cy="381.6" r=".9" fill="#8a8f6a" fill-opacity=".85"/><circle cx="83.6" cy="364.1" r=".9" fill="#f58518" fill-opacity=".85"/><circle cx="83.2" cy="385.0" r=".9" fill="#72b7b2" fill-opacity=".85"/><circle cx="84.0" cy="369.2" r=".9" fill="#f58518" fill-opacity=".85"/><circle cx="83.3" cy="380.8" r=".9" fill="#f58518" fill-opacity=".85"/><circle cx="92.7" cy="384.1" r=".9" fill="#54a24b" fill-opacity=".85"/><circle cx="83.1" cy="378.0" r=".9" fill="#8a8f6a" fill-opacity=".85"/><circle cx="93.5" cy="371.2" r=".9" fill="#f58518" fill-opacity=".85"/><circle cx="86.6" cy="368.7" r=".9" fill="#f58518" fill-opacity=".85"/><circle cx="83.3" cy="378.0" r=".9" fill="#8a8f6a" fill-opacity=".85"/><circle cx="83.1" cy="383.7" r=".9" fill="#f58518" fill-opacity=".85"/><circle cx="83.1" cy="373.6" r=".9" fill="#54a24b" fill-opacity=".85"/><circle cx="89.7" cy="379.2" r=".9" fill="#72b7b2" fill-opacity=".85"/><circle cx="84.4" cy="384.3" r=".9" fill="#72b7b2" fill-opacity=".85"/><circle cx="85.5" cy="379.8" r=".9" fill="#e45756" fill-opacity=".85"/><circle cx="86.1" cy="376.7" r=".9" fill="#8a8f6a" fill-opacity=".85"/><circle cx="84.9" cy="382.2" r=".9" fill="#e45756" fill-opacity=".85"/><circle cx="84.4" cy="354.0" r=".9" fill="#b279a2" fill-opacity=".85"/><circle cx="91.5" cy="382.2" r=".9" fill="#f58518" fill-opacity=".85"/><circle cx="87.0" cy="380.7" r=".9" fill="#54a24b" fill-opacity=".85"/><circle cx="85.2" cy="386.1" r=".9" fill="#54a24b" fill-opacity=".85"/><circle cx="85.0" cy="363.5" r=".9" fill="#f58518" fill-opacity=".85"/><circle cx="83.5" cy="387.6" r=".9" fill="#f58518" fill-opacity=".85"/><circle cx="83.3" cy="377.4" r=".9" fill="#72b7b2" fill-opacity=".85"/><circle cx="83.7" cy="383.4" r=".9" fill="#8a8f6a" fill-opacity=".85"/><circle cx="93.3" cy="380.4" r=".9" fill="#8a8f6a" fill-opacity=".85"/><circle cx="84.3" cy="368.2" r=".9" fill="#eeca3b" fill-opacity=".85"/><circle cx="84.4" cy="376.8" r=".9" fill="#54a24b" fill-opacity=".85"/><circle cx="92.3" cy="367.6" r=".9" fill="#f58518" fill-opacity=".85"/><circle cx="87.0" cy="363.6" r=".9" fill="#e45756" fill-opacity=".85"/><circle cx="90.4" cy="367.1" r=".9" fill="#f58518" fill-opacity=".85"/><circle cx="83.1" cy="357.6" r=".9" fill="#f58518" fill-opacity=".85"/><circle cx="83.4" cy="384.7" r=".9" fill="#8a8f6a" fill-opacity=".85"/><circle cx="83.1" cy="379.0" r=".9" fill="#54a24b" fill-opacity=".85"/><circle cx="87.3" cy="381.8" r=".9" fill="#f58518" fill-opacity=".85"/><circle cx="86.1" cy="376.2" r=".9" fill="#f58518" fill-opacity=".85"/><circle cx="84.4" cy="384.4" r=".9" fill="#f58518" fill-opacity=".85"/><circle cx="85.3" cy="381.9" r=".9" fill="#72b7b2" fill-opacity=".85"/><circle cx="100.0" cy="371.5" r=".9" fill="#72b7b2" fill-opacity=".85"/><circle cx="89.0" cy="380.1" r=".9" fill="#f58518" fill-opacity=".85"/><circle cx="84.9" cy="386.6" r=".9" fill="#f58518" fill-opacity=".85"/><circle cx="83.3" cy="381.6" r=".9" fill="#54a24b" fill-opacity=".85"/><circle cx="83.1" cy="386.6" r=".9" fill="#f58518" fill-opacity=".85"/><circle cx="88.9" cy="380.0" r=".9" fill="#72b7b2" fill-opacity=".85"/><circle cx="91.9" cy="367.5" r=".9" fill="#f58518" fill-opacity=".85"/><circle cx="89.6" cy="377.3" r=".9" fill="#f58518" fill-opacity=".85"/><circle cx="84.3" cy="368.6" r=".9" fill="#ff9da6" fill-opacity=".85"/><circle cx="89.1" cy="358.4" r=".9" fill="#f58518" fill-opacity=".85"/><circle cx="86.7" cy="383.5" r=".9" fill="#72b7b2" fill-opacity=".85"/><circle cx="84.2" cy="369.5" r=".9" fill="#e45756" fill-opacity=".85"/><circle cx="96.2" cy="370.8" r=".9" fill="#e45756" fill-opacity=".85"/><circle cx="85.7" cy="383.9" r=".9" fill="#8a8f6a" fill-opacity=".85"/><circle cx="85.0" cy="376.4" r=".9" fill="#f58518" fill-opacity=".85"/><circle cx="91.9" cy="377.1" r=".9" fill="#54a24b" fill-opacity=".85"/><circle cx="88.7" cy="381.2" r=".9" fill="#f58518" fill-opacity=".85"/><circle cx="86.1" cy="375.0" r=".9" fill="#54a24b" fill-opacity=".85"/><circle cx="84.1" cy="378.6" r=".9" fill="#e45756" fill-opacity=".85"/><circle cx="89.3" cy="376.7" r=".9" fill="#72b7b2" fill-opacity=".85"/><circle cx="83.5" cy="383.8" r=".9" fill="#8a8f6a" fill-opacity=".85"/><circle cx="83.7" cy="373.3" r=".9" fill="#72b7b2" fill-opacity=".85"/><circle cx="84.1" cy="375.6" r=".9" fill="#72b7b2" fill-opacity=".85"/><circle cx="93.4" cy="353.4" r=".9" fill="#e45756" fill-opacity=".85"/><circle cx="83.9" cy="383.7" r=".9" fill="#f58518" fill-opacity=".85"/><circle cx="85.8" cy="363.0" r=".9" fill="#f58518" fill-opacity=".85"/><circle cx="86.7" cy="387.5" r=".9" fill="#72b7b2" fill-opacity=".85"/><circle cx="84.7" cy="386.2" r=".9" fill="#8a8f6a" fill-opacity=".85"/><circle cx="85.0" cy="384.0" r=".9" fill="#f58518" fill-opacity=".85"/><circle cx="86.8" cy="380.5" r=".9" fill="#8a8f6a" fill-opacity=".85"/><circle cx="87.8" cy="381.3" r=".9" fill="#8a8f6a" fill-opacity=".85"/><circle cx="91.1" cy="367.3" r=".9" fill="#f58518" fill-opacity=".85"/><circle cx="96.6" cy="373.1" r=".9" fill="#f58518" fill-opacity=".85"/><circle cx="86.5" cy="376.0" r=".9" fill="#72b7b2" fill-opacity=".85"/><circle cx="88.2" cy="378.9" r=".9" fill="#54a24b" fill-opacity=".85"/><circle cx="83.2" cy="388.0" r=".9" fill="#8a8f6a" fill-opacity=".85"/><circle cx="83.1" cy="371.7" r=".9" fill="#72b7b2" fill-opacity=".85"/><circle cx="87.2" cy="383.6" r=".9" fill="#72b7b2" fill-opacity=".85"/><circle cx="86.6" cy="377.4" r=".9" fill="#72b7b2" fill-opacity=".85"/><circle cx="83.7" cy="383.9" r=".9" fill="#54a24b" fill-opacity=".85"/><circle cx="103.4" cy="361.4" r=".9" fill="#e45756" fill-opacity=".85"/><circle cx="82.9" cy="367.8" r=".9" fill="#eeca3b" fill-opacity=".85"/><circle cx="83.2" cy="376.5" r=".9" fill="#54a24b" fill-opacity=".85"/><circle cx="84.1" cy="376.7" r=".9" fill="#e45756" fill-opacity=".85"/><circle cx="93.3" cy="353.3" r=".9" fill="#e45756" fill-opacity=".85"/><circle cx="84.1" cy="378.7" r=".9" fill="#72b7b2" fill-opacity=".85"/><circle cx="97.2" cy="367.2" r=".9" fill="#f58518" fill-opacity=".85"/><circle cx="83.3" cy="380.4" r=".9" fill="#8a8f6a" fill-opacity=".85"/><circle cx="90.3" cy="384.3" r=".9" fill="#f58518" fill-opacity=".85"/><circle cx="83.8" cy="382.2" r=".9" fill="#f58518" fill-opacity=".85"/><circle cx="92.4" cy="368.8" r=".9" fill="#ff9da6" fill-opacity=".85"/><circle cx="90.3" cy="375.3" r=".9" fill="#72b7b2" fill-opacity=".85"/><circle cx="87.7" cy="364.1" r=".9" fill="#ff9da6" fill-opacity=".85"/><circle cx="84.0" cy="363.4" r=".9" fill="#eeca3b" fill-opacity=".85"/><circle cx="86.8" cy="382.8" r=".9" fill="#8a8f6a" fill-opacity=".85"/><circle cx="83.0" cy="386.9" r=".9" fill="#8a8f6a" fill-opacity=".85"/><circle cx="84.6" cy="386.6" r=".9" fill="#54a24b" fill-opacity=".85"/><circle cx="83.5" cy="376.9" r=".9" fill="#54a24b" fill-opacity=".85"/><circle cx="88.2" cy="383.5" r=".9" fill="#f58518" fill-opacity=".85"/><circle cx="83.8" cy="353.7" r=".9" fill="#e45756" fill-opacity=".85"/><circle cx="91.4" cy="365.0" r=".9" fill="#eeca3b" fill-opacity=".85"/><circle cx="83.4" cy="385.7" r=".9" fill="#54a24b" fill-opacity=".85"/><circle cx="94.8" cy="350.0" r=".9" fill="#e45756" fill-opacity=".85"/><circle cx="89.9" cy="374.7" r=".9" fill="#54a24b" fill-opacity=".85"/><circle cx="83.5" cy="370.6" r=".9" fill="#f58518" fill-opacity=".85"/><circle cx="84.4" cy="382.2" r=".9" fill="#f58518" fill-opacity=".85"/><circle cx="93.5" cy="377.2" r=".9" fill="#f58518" fill-opacity=".85"/><circle cx="88.8" cy="374.5" r=".9" fill="#f58518" fill-opacity=".85"/><circle cx="86.8" cy="385.9" r=".9" fill="#f58518" fill-opacity=".85"/><circle cx="85.8" cy="385.4" r=".9" fill="#54a24b" fill-opacity=".85"/><circle cx="86.0" cy="382.2" r=".9" fill="#54a24b" fill-opacity=".85"/><circle cx="86.3" cy="382.6" r=".9" fill="#72b7b2" fill-opacity=".85"/><circle cx="83.8" cy="371.4" r=".9" fill="#54a24b" fill-opacity=".85"/><circle cx="84.6" cy="385.6" r=".9" fill="#8a8f6a" fill-opacity=".85"/><circle cx="96.6" cy="361.4" r=".9" fill="#e45756" fill-opacity=".85"/><circle cx="84.1" cy="356.2" r=".9" fill="#f58518" fill-opacity=".85"/><circle cx="94.0" cy="383.0" r=".9" fill="#e45756" fill-opacity=".85"/><circle cx="88.7" cy="373.4" r=".9" fill="#72b7b2" fill-opacity=".85"/><circle cx="89.1" cy="374.6" r=".9" fill="#f58518" fill-opacity=".85"/><circle cx="93.5" cy="353.6" r=".9" fill="#ff9da6" fill-opacity=".85"/><circle cx="91.7" cy="385.7" r=".9" fill="#f58518" fill-opacity=".85"/><circle cx="85.1" cy="379.1" r=".9" fill="#e45756" fill-opacity=".85"/><circle cx="84.0" cy="380.8" r=".9" fill="#e45756" fill-opacity=".85"/><circle cx="88.5" cy="374.3" r=".9" fill="#f58518" fill-opacity=".85"/><circle cx="85.9" cy="364.3" r=".9" fill="#e45756" fill-opacity=".85"/><circle cx="88.3" cy="383.2" r=".9" fill="#f58518" fill-opacity=".85"/><circle cx="86.4" cy="384.7" r=".9" fill="#e45756" fill-opacity=".85"/><circle cx="84.0" cy="385.5" r=".9" fill="#e45756" fill-opacity=".85"/><circle cx="89.9" cy="371.1" r=".9" fill="#8a8f6a" fill-opacity=".85"/><circle cx="88.0" cy="375.8" r=".9" fill="#8a8f6a" fill-opacity=".85"/><circle cx="84.5" cy="384.0" r=".9" fill="#e45756" fill-opacity=".85"/><circle cx="104.0" cy="368.2" r=".9" fill="#f58518" fill-opacity=".85"/><circle cx="84.8" cy="340.9" r=".9" fill="#eeca3b" fill-opacity=".85"/><circle cx="85.2" cy="384.0" r=".9" fill="#54a24b" fill-opacity=".85"/><circle cx="84.2" cy="363.7" r=".9" fill="#f58518" fill-opacity=".85"/><circle cx="84.9" cy="369.2" r=".9" fill="#e45756" fill-opacity=".85"/><circle cx="98.7" cy="384.0" r=".9" fill="#f58518" fill-opacity=".85"/><circle cx="86.6" cy="379.0" r=".9" fill="#f58518" fill-opacity=".85"/><circle cx="87.7" cy="374.5" r=".9" fill="#8a8f6a" fill-opacity=".85"/><circle cx="87.3" cy="371.6" r=".9" fill="#e45756" fill-opacity=".85"/><circle cx="87.7" cy="363.0" r=".9" fill="#ff9da6" fill-opacity=".85"/><circle cx="83.4" cy="381.9" r=".9" fill="#e45756" fill-opacity=".85"/><circle cx="83.3" cy="381.9" r=".9" fill="#e45756" fill-opacity=".85"/><circle cx="87.9" cy="380.9" r=".9" fill="#f58518" fill-opacity=".85"/><circle cx="85.3" cy="376.3" r=".9" fill="#e45756" fill-opacity=".85"/><circle cx="87.2" cy="360.6" r=".9" fill="#f58518" fill-opacity=".85"/><circle cx="88.9" cy="379.1" r=".9" fill="#54a24b" fill-opacity=".85"/><circle cx="83.1" cy="379.6" r=".9" fill="#8a8f6a" fill-opacity=".85"/><circle cx="85.8" cy="384.9" r=".9" fill="#72b7b2" fill-opacity=".85"/><circle cx="83.8" cy="381.2" r=".9" fill="#f58518" fill-opacity=".85"/><circle cx="85.8" cy="378.9" r=".9" fill="#8a8f6a" fill-opacity=".85"/><circle cx="101.4" cy="373.7" r=".9" fill="#54a24b" fill-opacity=".85"/><circle cx="88.1" cy="373.5" r=".9" fill="#f58518" fill-opacity=".85"/><circle cx="84.2" cy="382.7" r=".9" fill="#f58518" fill-opacity=".85"/><circle cx="92.8" cy="368.7" r=".9" fill="#e45756" fill-opacity=".85"/><circle cx="84.1" cy="384.3" r=".9" fill="#72b7b2" fill-opacity=".85"/><circle cx="85.4" cy="383.3" r=".9" fill="#54a24b" fill-opacity=".85"/><circle cx="89.5" cy="373.2" r=".9" fill="#72b7b2" fill-opacity=".85"/><circle cx="88.0" cy="368.8" r=".9" fill="#ff9da6" fill-opacity=".85"/><circle cx="87.0" cy="365.2" r=".9" fill="#eeca3b" fill-opacity=".85"/><circle cx="105.1" cy="353.8" r=".9" fill="#ff9da6" fill-opacity=".85"/><circle cx="84.7" cy="366.8" r=".9" fill="#eeca3b" fill-opacity=".85"/><circle cx="87.6" cy="339.4" r=".9" fill="#ff9da6" fill-opacity=".85"/><circle cx="82.9" cy="374.2" r=".9" fill="#8a8f6a" fill-opacity=".85"/><circle cx="87.1" cy="381.4" r=".9" fill="#72b7b2" fill-opacity=".85"/><circle cx="87.0" cy="374.5" r=".9" fill="#f58518" fill-opacity=".85"/><circle cx="90.6" cy="379.4" r=".9" fill="#f58518" fill-opacity=".85"/><circle cx="89.0" cy="380.0" r=".9" fill="#e45756" fill-opacity=".85"/><circle cx="86.4" cy="375.6" r=".9" fill="#54a24b" fill-opacity=".85"/><circle cx="87.2" cy="384.6" r=".9" fill="#8a8f6a" fill-opacity=".85"/><circle cx="90.6" cy="381.5" r=".9" fill="#8a8f6a" fill-opacity=".85"/><circle cx="83.8" cy="382.0" r=".9" fill="#72b7b2" fill-opacity=".85"/><circle cx="91.8" cy="369.0" r=".9" fill="#ff9da6" fill-opacity=".85"/><circle cx="92.2" cy="371.9" r=".9" fill="#f58518" fill-opacity=".85"/><circle cx="83.8" cy="374.7" r=".9" fill="#e45756" fill-opacity=".85"/><circle cx="90.2" cy="375.0" r=".9" fill="#54a24b" fill-opacity=".85"/><circle cx="84.1" cy="385.1" r=".9" fill="#f58518" fill-opacity=".85"/><circle cx="86.2" cy="377.2" r=".9" fill="#e45756" fill-opacity=".85"/><circle cx="85.6" cy="378.8" r=".9" fill="#e45756" fill-opacity=".85"/><circle cx="82.9" cy="368.1" r=".9" fill="#e45756" fill-opacity=".85"/><circle cx="85.7" cy="382.8" r=".9" fill="#f58518" fill-opacity=".85"/><circle cx="85.1" cy="352.5" r=".9" fill="#eeca3b" fill-opacity=".85"/><circle cx="86.9" cy="384.8" r=".9" fill="#e45756" fill-opacity=".85"/><circle cx="83.3" cy="380.6" r=".9" fill="#8a8f6a" fill-opacity=".85"/><circle cx="83.0" cy="374.3" r=".9" fill="#f58518" fill-opacity=".85"/><circle cx="83.3" cy="376.3" r=".9" fill="#72b7b2" fill-opacity=".85"/><circle cx="86.1" cy="360.3" r=".9" fill="#f58518" fill-opacity=".85"/><circle cx="85.1" cy="377.1" r=".9" fill="#f58518" fill-opacity=".85"/><circle cx="84.7" cy="380.1" r=".9" fill="#f58518" fill-opacity=".85"/><circle cx="91.2" cy="381.5" r=".9" fill="#f58518" fill-opacity=".85"/><circle cx="89.2" cy="381.3" r=".9" fill="#f58518" fill-opacity=".85"/><circle cx="83.4" cy="348.6" r=".9" fill="#e45756" fill-opacity=".85"/><circle cx="84.9" cy="378.3" r=".9" fill="#72b7b2" fill-opacity=".85"/><circle cx="83.1" cy="384.4" r=".9" fill="#8a8f6a" fill-opacity=".85"/><circle cx="89.8" cy="374.3" r=".9" fill="#54a24b" fill-opacity=".85"/><circle cx="89.1" cy="356.9" r=".9" fill="#e45756" fill-opacity=".85"/><circle cx="83.5" cy="375.4" r=".9" fill="#e45756" fill-opacity=".85"/><circle cx="83.2" cy="387.6" r=".9" fill="#e45756" fill-opacity=".85"/><circle cx="88.7" cy="385.8" r=".9" fill="#54a24b" fill-opacity=".85"/><circle cx="85.1" cy="384.5" r=".9" fill="#54a24b" fill-opacity=".85"/><circle cx="84.7" cy="367.4" r=".9" fill="#e45756" fill-opacity=".85"/><circle cx="87.9" cy="365.3" r=".9" fill="#f58518" fill-opacity=".85"/><circle cx="84.4" cy="380.8" r=".9" fill="#54a24b" fill-opacity=".85"/><circle cx="85.7" cy="377.2" r=".9" fill="#f58518" fill-opacity=".85"/><circle cx="86.3" cy="358.7" r=".9" fill="#f58518" fill-opacity=".85"/><circle cx="87.5" cy="372.5" r=".9" fill="#e45756" fill-opacity=".85"/><circle cx="98.7" cy="372.7" r=".9" fill="#54a24b" fill-opacity=".85"/><circle cx="83.2" cy="380.9" r=".9" fill="#e45756" fill-opacity=".85"/><circle cx="83.0" cy="388.2" r=".9" fill="#54a24b" fill-opacity=".85"/><circle cx="100.2" cy="361.9" r=".9" fill="#f58518" fill-opacity=".85"/><circle cx="83.5" cy="387.6" r=".9" fill="#8a8f6a" fill-opacity=".85"/><circle cx="85.3" cy="370.4" r=".9" fill="#f58518" fill-opacity=".85"/><circle cx="88.8" cy="367.9" r=".9" fill="#ff9da6" fill-opacity=".85"/><circle cx="88.6" cy="380.4" r=".9" fill="#f58518" fill-opacity=".85"/><circle cx="85.4" cy="357.9" r=".9" fill="#f58518" fill-opacity=".85"/><circle cx="88.0" cy="388.1" r=".9" fill="#e45756" fill-opacity=".85"/><circle cx="87.5" cy="375.4" r=".9" fill="#f58518" fill-opacity=".85"/><circle cx="88.1" cy="380.5" r=".9" fill="#f58518" fill-opacity=".85"/><circle cx="86.7" cy="379.5" r=".9" fill="#e45756" fill-opacity=".85"/><circle cx="85.2" cy="375.4" r=".9" fill="#54a24b" fill-opacity=".85"/><circle cx="84.7" cy="375.4" r=".9" fill="#f58518" fill-opacity=".85"/><circle cx="85.5" cy="370.2" r=".9" fill="#f58518" fill-opacity=".85"/><circle cx="89.0" cy="376.8" r=".9" fill="#54a24b" fill-opacity=".85"/><circle cx="86.8" cy="372.7" r=".9" fill="#72b7b2" fill-opacity=".85"/><circle cx="84.5" cy="376.0" r=".9" fill="#8a8f6a" fill-opacity=".85"/><circle cx="86.6" cy="382.2" r=".9" fill="#8a8f6a" fill-opacity=".85"/><circle cx="84.8" cy="374.1" r=".9" fill="#8a8f6a" fill-opacity=".85"/><circle cx="89.5" cy="384.6" r=".9" fill="#f58518" fill-opacity=".85"/><circle cx="84.1" cy="384.9" r=".9" fill="#54a24b" fill-opacity=".85"/><circle cx="84.3" cy="385.1" r=".9" fill="#72b7b2" fill-opacity=".85"/><circle cx="83.5" cy="346.9" r=".9" fill="#b279a2" fill-opacity=".85"/><circle cx="87.5" cy="359.3" r=".9" fill="#f58518" fill-opacity=".85"/><circle cx="86.0" cy="379.5" r=".9" fill="#e45756" fill-opacity=".85"/><circle cx="93.6" cy="376.9" r=".9" fill="#e45756" fill-opacity=".85"/><circle cx="84.9" cy="372.3" r=".9" fill="#72b7b2" fill-opacity=".85"/><circle cx="88.5" cy="367.7" r=".9" fill="#f58518" fill-opacity=".85"/><circle cx="86.0" cy="383.2" r=".9" fill="#f58518" fill-opacity=".85"/><circle cx="86.4" cy="359.3" r=".9" fill="#e45756" fill-opacity=".85"/><circle cx="84.4" cy="380.1" r=".9" fill="#8a8f6a" fill-opacity=".85"/><circle cx="83.8" cy="385.3" r=".9" fill="#f58518" fill-opacity=".85"/><circle cx="86.3" cy="379.9" r=".9" fill="#8a8f6a" fill-opacity=".85"/><circle cx="84.0" cy="359.4" r=".9" fill="#f58518" fill-opacity=".85"/><circle cx="84.8" cy="381.3" r=".9" fill="#f58518" fill-opacity=".85"/><circle cx="86.5" cy="381.2" r=".9" fill="#54a24b" fill-opacity=".85"/><circle cx="83.3" cy="385.3" r=".9" fill="#72b7b2" fill-opacity=".85"/><circle cx="85.6" cy="378.2" r=".9" fill="#f58518" fill-opacity=".85"/><circle cx="85.1" cy="353.9" r=".9" fill="#b279a2" fill-opacity=".85"/><circle cx="96.1" cy="384.4" r=".9" fill="#8a8f6a" fill-opacity=".85"/><circle cx="103.8" cy="382.3" r=".9" fill="#54a24b" fill-opacity=".85"/><circle cx="86.2" cy="363.9" r=".9" fill="#f58518" fill-opacity=".85"/><circle cx="90.9" cy="367.5" r=".9" fill="#ff9da6" fill-opacity=".85"/><circle cx="95.7" cy="375.6" r=".9" fill="#e45756" fill-opacity=".85"/><circle cx="83.3" cy="360.1" r=".9" fill="#f58518" fill-opacity=".85"/><circle cx="85.3" cy="383.4" r=".9" fill="#e45756" fill-opacity=".85"/><circle cx="83.9" cy="387.5" r=".9" fill="#f58518" fill-opacity=".85"/><circle cx="83.1" cy="379.4" r=".9" fill="#54a24b" fill-opacity=".85"/><circle cx="84.1" cy="379.2" r=".9" fill="#f58518" fill-opacity=".85"/><circle cx="83.1" cy="386.4" r=".9" fill="#8a8f6a" fill-opacity=".85"/><circle cx="87.4" cy="380.9" r=".9" fill="#e45756" fill-opacity=".85"/><circle cx="83.3" cy="383.8" r=".9" fill="#54a24b" fill-opacity=".85"/><circle cx="84.8" cy="382.0" r=".9" fill="#8a8f6a" fill-opacity=".85"/><circle cx="92.7" cy="357.8" r=".9" fill="#f58518" fill-opacity=".85"/><circle cx="89.3" cy="379.5" r=".9" fill="#54a24b" fill-opacity=".85"/><circle cx="93.8" cy="353.6" r=".9" fill="#f58518" fill-opacity=".85"/><circle cx="88.9" cy="346.2" r=".9" fill="#ff9da6" fill-opacity=".85"/><circle cx="90.3" cy="373.1" r=".9" fill="#f58518" fill-opacity=".85"/><circle cx="84.5" cy="385.1" r=".9" fill="#f58518" fill-opacity=".85"/><circle cx="83.5" cy="385.5" r=".9" fill="#e45756" fill-opacity=".85"/><circle cx="85.3" cy="362.7" r=".9" fill="#f58518" fill-opacity=".85"/><circle cx="84.1" cy="382.2" r=".9" fill="#f58518" fill-opacity=".85"/><circle cx="86.3" cy="380.9" r=".9" fill="#f58518" fill-opacity=".85"/><circle cx="85.6" cy="380.9" r=".9" fill="#54a24b" fill-opacity=".85"/><circle cx="83.6" cy="379.8" r=".9" fill="#e45756" fill-opacity=".85"/><circle cx="93.3" cy="368.0" r=".9" fill="#f58518" fill-opacity=".85"/><circle cx="84.1" cy="385.3" r=".9" fill="#f58518" fill-opacity=".85"/><circle cx="107.9" cy="356.6" r=".9" fill="#f58518" fill-opacity=".85"/><circle cx="85.0" cy="384.0" r=".9" fill="#f58518" fill-opacity=".85"/><circle cx="83.5" cy="376.7" r=".9" fill="#72b7b2" fill-opacity=".85"/><circle cx="84.6" cy="386.6" r=".9" fill="#72b7b2" fill-opacity=".85"/><circle cx="84.2" cy="383.3" r=".9" fill="#f58518" fill-opacity=".85"/><circle cx="83.9" cy="378.8" r=".9" fill="#8a8f6a" fill-opacity=".85"/><circle cx="85.8" cy="384.7" r=".9" fill="#72b7b2" fill-opacity=".85"/><circle cx="83.2" cy="387.0" r=".9" fill="#f58518" fill-opacity=".85"/><circle cx="88.6" cy="385.2" r=".9" fill="#e45756" fill-opacity=".85"/><circle cx="87.8" cy="366.2" r=".9" fill="#f58518" fill-opacity=".85"/><circle cx="82.9" cy="375.3" r=".9" fill="#e45756" fill-opacity=".85"/><circle cx="92.8" cy="375.8" r=".9" fill="#f58518" fill-opacity=".85"/><circle cx="90.3" cy="361.6" r=".9" fill="#f58518" fill-opacity=".85"/><circle cx="85.0" cy="372.1" r=".9" fill="#e45756" fill-opacity=".85"/><circle cx="84.1" cy="384.7" r=".9" fill="#f58518" fill-opacity=".85"/><circle cx="83.0" cy="374.9" r=".9" fill="#54a24b" fill-opacity=".85"/><circle cx="84.7" cy="356.5" r=".9" fill="#f58518" fill-opacity=".85"/><circle cx="83.4" cy="374.0" r=".9" fill="#f58518" fill-opacity=".85"/><circle cx="88.9" cy="361.5" r=".9" fill="#f58518" fill-opacity=".85"/><circle cx="84.3" cy="385.7" r=".9" fill="#f58518" fill-opacity=".85"/><circle cx="85.8" cy="378.0" r=".9" fill="#54a24b" fill-opacity=".85"/><circle cx="84.0" cy="386.4" r=".9" fill="#8a8f6a" fill-opacity=".85"/><circle cx="83.3" cy="384.7" r=".9" fill="#54a24b" fill-opacity=".85"/><circle cx="83.0" cy="359.5" r=".9" fill="#f58518" fill-opacity=".85"/><circle cx="83.0" cy="378.2" r=".9" fill="#72b7b2" fill-opacity=".85"/><circle cx="84.0" cy="381.3" r=".9" fill="#54a24b" fill-opacity=".85"/><circle cx="88.0" cy="387.0" r=".9" fill="#f58518" fill-opacity=".85"/><circle cx="86.4" cy="372.0" r=".9" fill="#54a24b" fill-opacity=".85"/><circle cx="85.0" cy="385.1" r=".9" fill="#8a8f6a" fill-opacity=".85"/><circle cx="83.5" cy="378.3" r=".9" fill="#8a8f6a" fill-opacity=".85"/><circle cx="94.7" cy="378.3" r=".9" fill="#e45756" fill-opacity=".85"/><circle cx="85.1" cy="366.7" r=".9" fill="#eeca3b" fill-opacity=".85"/><circle cx="97.0" cy="381.1" r=".9" fill="#f58518" fill-opacity=".85"/><circle cx="84.0" cy="383.2" r=".9" fill="#72b7b2" fill-opacity=".85"/><circle cx="89.4" cy="354.6" r=".9" fill="#b279a2" fill-opacity=".85"/><circle cx="83.1" cy="380.0" r=".9" fill="#f58518" fill-opacity=".85"/><circle cx="84.0" cy="381.3" r=".9" fill="#f58518" fill-opacity=".85"/><circle cx="83.4" cy="385.8" r=".9" fill="#8a8f6a" fill-opacity=".85"/><circle cx="85.7" cy="387.6" r=".9" fill="#f58518" fill-opacity=".85"/><circle cx="88.9" cy="353.0" r=".9" fill="#e45756" fill-opacity=".85"/><circle cx="83.0" cy="377.0" r=".9" fill="#e45756" fill-opacity=".85"/><circle cx="86.8" cy="373.3" r=".9" fill="#54a24b" fill-opacity=".85"/><circle cx="86.8" cy="382.5" r=".9" fill="#f58518" fill-opacity=".85"/><circle cx="84.0" cy="387.7" r=".9" fill="#f58518" fill-opacity=".85"/><circle cx="87.1" cy="383.7" r=".9" fill="#72b7b2" fill-opacity=".85"/><circle cx="92.2" cy="380.2" r=".9" fill="#8a8f6a" fill-opacity=".85"/><circle cx="85.2" cy="377.7" r=".9" fill="#f58518" fill-opacity=".85"/><circle cx="86.3" cy="381.5" r=".9" fill="#e45756" fill-opacity=".85"/><circle cx="86.1" cy="365.7" r=".9" fill="#e45756" fill-opacity=".85"/><circle cx="83.9" cy="382.2" r=".9" fill="#f58518" fill-opacity=".85"/><circle cx="85.4" cy="377.6" r=".9" fill="#f58518" fill-opacity=".85"/><circle cx="89.7" cy="385.0" r=".9" fill="#8a8f6a" fill-opacity=".85"/><circle cx="85.8" cy="380.8" r=".9" fill="#54a24b" fill-opacity=".85"/><circle cx="93.2" cy="373.6" r=".9" fill="#f58518" fill-opacity=".85"/><circle cx="86.2" cy="379.7" r=".9" fill="#8a8f6a" fill-opacity=".85"/><circle cx="84.3" cy="371.7" r=".9" fill="#54a24b" fill-opacity=".85"/><circle cx="86.6" cy="380.4" r=".9" fill="#72b7b2" fill-opacity=".85"/><circle cx="84.9" cy="380.0" r=".9" fill="#54a24b" fill-opacity=".85"/><circle cx="93.8" cy="372.9" r=".9" fill="#8a8f6a" fill-opacity=".85"/><circle cx="87.4" cy="372.8" r=".9" fill="#72b7b2" fill-opacity=".85"/><circle cx="83.3" cy="366.5" r=".9" fill="#eeca3b" fill-opacity=".85"/><circle cx="84.2" cy="376.3" r=".9" fill="#e45756" fill-opacity=".85"/><circle cx="83.4" cy="365.8" r=".9" fill="#e45756" fill-opacity=".85"/><circle cx="86.4" cy="376.3" r=".9" fill="#72b7b2" fill-opacity=".85"/><circle cx="83.5" cy="367.2" r=".9" fill="#e45756" fill-opacity=".85"/><circle cx="86.6" cy="380.9" r=".9" fill="#f58518" fill-opacity=".85"/><circle cx="84.3" cy="382.9" r=".9" fill="#72b7b2" fill-opacity=".85"/><circle cx="86.1" cy="381.6" r=".9" fill="#e45756" fill-opacity=".85"/><circle cx="90.5" cy="376.3" r=".9" fill="#8a8f6a" fill-opacity=".85"/><circle cx="86.0" cy="368.7" r=".9" fill="#eeca3b" fill-opacity=".85"/><circle cx="86.4" cy="383.1" r=".9" fill="#f58518" fill-opacity=".85"/><circle cx="96.8" cy="373.6" r=".9" fill="#f58518" fill-opacity=".85"/><circle cx="83.8" cy="381.1" r=".9" fill="#54a24b" fill-opacity=".85"/><circle cx="83.0" cy="384.9" r=".9" fill="#f58518" fill-opacity=".85"/><circle cx="93.0" cy="364.9" r=".9" fill="#eeca3b" fill-opacity=".85"/><circle cx="85.8" cy="377.7" r=".9" fill="#f58518" fill-opacity=".85"/><circle cx="85.4" cy="385.6" r=".9" fill="#f58518" fill-opacity=".85"/><circle cx="94.7" cy="367.8" r=".9" fill="#f58518" fill-opacity=".85"/><circle cx="85.0" cy="378.9" r=".9" fill="#72b7b2" fill-opacity=".85"/><circle cx="83.6" cy="385.6" r=".9" fill="#f58518" fill-opacity=".85"/><circle cx="85.2" cy="374.5" r=".9" fill="#f58518" fill-opacity=".85"/><circle cx="87.6" cy="372.6" r=".9" fill="#f58518" fill-opacity=".85"/><circle cx="84.4" cy="344.5" r=".9" fill="#b279a2" fill-opacity=".85"/><circle cx="83.7" cy="376.3" r=".9" fill="#f58518" fill-opacity=".85"/><circle cx="85.1" cy="385.6" r=".9" fill="#72b7b2" fill-opacity=".85"/><circle cx="83.8" cy="363.2" r=".9" fill="#f58518" fill-opacity=".85"/><circle cx="86.9" cy="376.3" r=".9" fill="#e45756" fill-opacity=".85"/><circle cx="86.9" cy="385.7" r=".9" fill="#54a24b" fill-opacity=".85"/><circle cx="84.4" cy="375.4" r=".9" fill="#f58518" fill-opacity=".85"/><circle cx="84.9" cy="387.1" r=".9" fill="#54a24b" fill-opacity=".85"/><circle cx="83.8" cy="380.1" r=".9" fill="#f58518" fill-opacity=".85"/><circle cx="91.1" cy="358.0" r=".9" fill="#f58518" fill-opacity=".85"/><circle cx="86.3" cy="381.9" r=".9" fill="#8a8f6a" fill-opacity=".85"/><circle cx="85.8" cy="380.4" r=".9" fill="#54a24b" fill-opacity=".85"/><circle cx="83.6" cy="379.4" r=".9" fill="#72b7b2" fill-opacity=".85"/><circle cx="85.2" cy="368.7" r=".9" fill="#ff9da6" fill-opacity=".85"/><circle cx="143.2" cy="340.0" r=".9" fill="#f58518" fill-opacity=".85"/><circle cx="123.0" cy="347.5" r=".9" fill="#eeca3b" fill-opacity=".85"/><circle cx="103.5" cy="327.0" r=".9" fill="#ff9da6" fill-opacity=".85"/><circle cx="102.0" cy="335.5" r=".9" fill="#b279a2" fill-opacity=".85"/><circle cx="106.0" cy="342.0" r=".9" fill="#e45756" fill-opacity=".85"/><circle cx="107.5" cy="369.5" r=".9" fill="#b279a2" fill-opacity=".85"/><circle cx="100.0" cy="386.0" r=".9" fill="#9d9d9d" fill-opacity=".85"/><circle cx="91.0" cy="341.0" r=".9" fill="#e45756" fill-opacity=".85"/><circle cx="95.0" cy="341.5" r=".9" fill="#f58518" fill-opacity=".85"/><circle cx="89.5" cy="346.5" r=".9" fill="#eeca3b" fill-opacity=".85"/><circle cx="99.0" cy="347.0" r=".9" fill="#e45756" fill-opacity=".85"/><circle cx="104.5" cy="347.5" r=".9" fill="#e45756" fill-opacity=".85"/><circle cx="101.0" cy="353.0" r=".9" fill="#e45756" fill-opacity=".85"/><circle cx="94.0" cy="351.5" r=".9" fill="#f58518" fill-opacity=".85"/><text x="80" y="328.0" text-anchor="end" font-size="2.800" fill="#222" font-family="Liberation Sans,sans-serif">300</text><text x="80" y="338.3" text-anchor="end" font-size="2.800" fill="#222" font-family="Liberation Sans,sans-serif">250</text><text x="80" y="348.5" text-anchor="end" font-size="2.800" fill="#222" font-family="Liberation Sans,sans-serif">200</text><text x="80" y="358.7" text-anchor="end" font-size="2.800" fill="#222" font-family="Liberation Sans,sans-serif">150</text><text x="80" y="369.0" text-anchor="end" font-size="2.800" fill="#222" font-family="Liberation Sans,sans-serif">100</text><text x="80" y="379.2" text-anchor="end" font-size="2.800" fill="#222" font-family="Liberation Sans,sans-serif">50</text><text x="80" y="389.5" text-anchor="end" font-size="2.800" fill="#222" font-family="Liberation Sans,sans-serif">0</text><text x="83.5" y="393.800" text-anchor="middle" font-size="2.800" fill="#222" font-family="Liberation Sans,sans-serif">0</text><text x="93.5" y="393.800" text-anchor="middle" font-size="2.800" fill="#222" font-family="Liberation Sans,sans-serif">500...</text><text x="104.5" y="393.800" text-anchor="middle" font-size="2.800" fill="#222" font-family="Liberation Sans,sans-serif">1,0...</text><text x="116" y="393.800" text-anchor="middle" font-size="2.800" fill="#222" font-family="Liberation Sans,sans-serif">1,5...</text><text x="126.5" y="393.800" text-anchor="middle" font-size="2.800" fill="#222" font-family="Liberation Sans,sans-serif">2,00...</text><text x="137.5" y="393.800" text-anchor="middle" font-size="2.800" fill="#222" font-family="Liberation Sans,sans-serif">2,50...</text><text x="113" y="398.200" text-anchor="middle" font-size="3.300" font-weight="bold" fill="#222" font-family="Liberation Sans,sans-serif">Worldwide_Gross</text><text transform="translate(69.500,358) rotate(-90)" text-anchor="middle" font-size="3.300" font-weight="bold" fill="#111" font-family="Liberation Sans,sans-serif">Production_Budget</text><text x="149" y="329.700" font-size="3.300" font-weight="bold" fill="#222" font-family="Liberation Sans,sans-serif">Major_Genre</text><circle cx="150.700" cy="333.7" r=".9" fill="#9d9d9d"/><text x="153.800" y="334.75" font-size="3" fill="#222" font-family="Liberation Sans,sans-serif">null</text><circle cx="150.700" cy="337.7" r=".9" fill="#f58518"/><text x="153.800" y="338.76" font-size="3" fill="#222" font-family="Liberation Sans,sans-serif">Action</text><circle cx="150.700" cy="341.7" r=".9" fill="#e45756"/><text x="153.800" y="342.77" font-size="3" fill="#222" font-family="Liberation Sans,sans-serif">Adventure</text><circle cx="150.700" cy="345.7" r=".9" fill="#72b7b2"/><text x="153.800" y="346.78" font-size="3" fill="#222" font-family="Liberation Sans,sans-serif">Black Comedy</text><circle cx="150.700" cy="349.7" r=".9" fill="#54a24b"/><text x="153.800" y="350.79" font-size="3" fill="#222" font-family="Liberation Sans,sans-serif">Comedy</text><circle cx="150.700" cy="353.8" r=".9" fill="#eeca3b"/><text x="153.800" y="354.80" font-size="3" fill="#222" font-family="Liberation Sans,sans-serif">Concert/Performance</text><circle cx="150.700" cy="357.8" r=".9" fill="#b279a2"/><text x="153.800" y="358.81" font-size="3" fill="#222" font-family="Liberation Sans,sans-serif">Documentary</text><circle cx="150.700" cy="361.8" r=".9" fill="#ff9da6"/><text x="153.800" y="362.82" font-size="3" fill="#222" font-family="Liberation Sans,sans-serif">Drama</text><circle cx="150.700" cy="365.8" r=".9" fill="#9d755d"/><text x="153.800" y="366.83" font-size="3" fill="#222" font-family="Liberation Sans,sans-serif">Horror</text><circle cx="150.700" cy="369.8" r=".9" fill="#bab0ac"/><text x="153.800" y="370.84" font-size="3" fill="#222" font-family="Liberation Sans,sans-serif">Musical</text><circle cx="150.700" cy="373.8" r=".9" fill="#8a8f6a"/><text x="153.800" y="374.85" font-size="3" fill="#222" font-family="Liberation Sans,sans-serif">Romantic Comedy</text><circle cx="150.700" cy="377.8" r=".9" fill="#f58518"/><text x="153.800" y="378.86" font-size="3" fill="#222" font-family="Liberation Sans,sans-serif">Thriller/Suspense</text><circle cx="150.700" cy="381.8" r=".9" fill="#e45756"/><text x="153.800" y="382.87" font-size="3" fill="#222" font-family="Liberation Sans,sans-serif">Western</text></svg>
<div class="a" style="left:12px;top:421px;width:200px;height:28px;border:1px solid #e2e2e2;border-radius:5px;background:#fdf6f4"></div>
<svg style="left:22.500px;top:429.500px" width="11" height="11" viewBox="0 0 19 19"><rect x="1" y="16" width="13" height="2.800" fill="#aaa5a5"/><path d="M1.600 7.500L5.600 6.500L10.600 16H3.900z" fill="#aaa5a5"/><circle cx="2.700" cy="4.900" r="2" fill="#fff" stroke="#aaa5a5" stroke-width="1.900"/><path d="M4.500 4.800L10.300 4" stroke="#aaa5a5" stroke-width="2.200" fill="none"/><path d="M17.300 3.600L13.400 .9L10.300 2.800V6.600L13.400 8.900L17.500 6.700" fill="none" stroke="#aaa5a5" stroke-width="1.500" stroke-linejoin="round"/></svg>
<div class="a" style="left:78px;top:426px;width:35px;height:18px;border-radius:4px;background:#fdf0e7"></div>
<div class="a" style="left:125px;top:426px;width:42px;height:18px;border-radius:4px;background:#fdf0e7"></div>
<div class="t" style="left:84px;top:427px;font-size:12px;line-height:16px;color:#444">Title</div>
<svg style="left:114px;top:431px" width="9" height="9" viewBox="0 0 9 9"><path d="M1 1l7 7M8 1L1 8" stroke="#555" stroke-width="1"/></svg>
<div class="t" style="left:131px;top:427px;font-size:12px;line-height:16px;color:#444">Profit</div>
<svg style="left:15px;top:450px" width="11" height="14" viewBox="0 0 11 14"><path d="M5.500 0v12M1 8l4.500 4.500L10 8" fill="none" stroke="#4a86c8" stroke-width="1.300"/></svg>
<div class="a" style="left:12px;top:465px;width:204px;height:28px;border:1px solid #e0e4ee;border-left:3px solid #4a86c8;border-radius:5px;background:#eef2fb"></div>
<svg style="left:24.500px;top:472.500px" width="13" height="13" viewBox="0 0 14 14"><rect x="1" y="1" width="12" height="12" rx="1.500" fill="none" stroke="#4a86c8" stroke-width="1.500"/><path d="M1 5h12M1 9h12" stroke="#4a86c8" stroke-width="1.500"/></svg>
<div class="t" style="left:47px;top:471px;font-size:12px;line-height:16px;color:#4a4a4a">table-15</div>
<svg style="left:174px;top:471px" width="12" height="15" viewBox="0 0 12 15"><path d="M1.500 4h9v9.500a1.500 1.500 0 01-1.500 1.500H3a1.500 1.500 0 01-1.500-1.500zM0 1.500h3.500L4.500.5h3l1 1H12V3H0z" fill="#bf5a12"/></svg>
<svg style="left:192px;top:469px" width="19" height="19" viewBox="0 0 24 24"><path fill="none" stroke="#4a86c8" stroke-width="1.900" d="M12 4H5.500A1.500 1.500 0 004 5.500v13A1.500 1.500 0 005.500 20h13a1.500 1.500 0 001.500-1.500V12"/><path stroke="#4a86c8" stroke-width="1.900" fill="none" d="M8.500 16.500v-5M12 16.500v-7M15.500 16.500v-3M19 2.500v7M15.500 6h7"/></svg>
<div class="a" style="left:38px;top:501px;width:174px;height:75px;border:1px solid #e3e3e3;border-radius:5px;background:#fff"></div>
<svg style="left:38px;top:501px" width="174" height="75" viewBox="38 501 174 75"><path d="M79 507.500H184" stroke="#e6e6e6" stroke-width=".5"/><path d="M79 553V507.800H83.800V524H88.800V535H93.800V538.400L110 538.700L130 539.200L150 539.700L165 540.100L178.500 540.300V553Z" fill="#4c78a8"/><path d="M158 540V553" stroke="#7d9dc2" stroke-width=".4"/><path d="M163.5 540V553" stroke="#7d9dc2" stroke-width=".4"/><path d="M169 540V553" stroke="#7d9dc2" stroke-width=".4"/><path d="M173.5 540V553" stroke="#7d9dc2" stroke-width=".4"/><path d="M78.500 506V553.500" stroke="#888" stroke-width=".5"/><rect x="71.500" y="508.5" width="4" height="1.200" fill="#777"/><rect x="71.500" y="517.5" width="4" height="1.200" fill="#777"/><rect x="71.500" y="526.5" width="4" height="1.200" fill="#777"/><rect x="71.500" y="536" width="4" height="1.200" fill="#777"/><rect x="71.500" y="545" width="4" height="1.200" fill="#777"/><rect x="76" y="552.300" width="1.500" height="1.200" fill="#777"/><rect x="66.700" y="528.500" width="1.800" height="7.500" fill="#111" fill-opacity=".9"/><rect x="80.9" y="560.3" width="1.200" height="5.6" fill="#555" fill-opacity=".75"/><rect x="81.2" y="556" width=".6" height="1.500" fill="#aaa"/><rect x="85.9" y="561.1" width="1.200" height="4.8" fill="#555" fill-opacity=".75"/><rect x="86.2" y="556" width=".6" height="1.500" fill="#aaa"/><rect x="90.9" y="563.1" width="1.200" height="2.8" fill="#555" fill-opacity=".75"/><rect x="91.2" y="556" width=".6" height="1.500" fill="#aaa"/><rect x="95.9" y="563.5" width="1.200" height="2.4" fill="#555" fill-opacity=".75"/><rect x="96.2" y="556" width=".6" height="1.500" fill="#aaa"/><rect x="100.9" y="562.3" width="1.200" height="3.6" fill="#555" fill-opacity=".75"/><rect x="101.2" y="556" width=".6" height="1.500" fill="#aaa"/><rect x="105.9" y="562.3" width="1.200" height="3.6" fill="#555" fill-opacity=".75"/><rect x="106.2" y="556" width=".6" height="1.500" fill="#aaa"/><rect x="110.9" y="562.7" width="1.200" height="3.2" fill="#555" fill-opacity=".75"/><rect x="111.2" y="556" width=".6" height="1.500" fill="#aaa"/><rect x="115.9" y="562.3" width="1.200" height="3.6" fill="#555" fill-opacity=".75"/><rect x="116.2" y="556" width=".6" height="1.500" fill="#aaa"/><rect x="120.9" y="562.7" width="1.200" height="3.2" fill="#555" fill-opacity=".75"/><rect x="121.2" y="556" width=".6" height="1.500" fill="#aaa"/><rect x="125.9" y="562.3" width="1.200" height="3.6" fill="#555" fill-opacity=".75"/><rect x="126.2" y="556" width=".6" height="1.500" fill="#aaa"/><rect x="130.9" y="563.5" width="1.200" height="2.4" fill="#555" fill-opacity=".75"/><rect x="131.2" y="556" width=".6" height="1.500" fill="#aaa"/><rect x="135.9" y="562.7" width="1.200" height="3.2" fill="#555" fill-opacity=".75"/><rect x="136.2" y="556" width=".6" height="1.500" fill="#aaa"/><rect x="140.9" y="564.7" width="1.200" height="1.2" fill="#555" fill-opacity=".75"/><rect x="141.2" y="556" width=".6" height="1.500" fill="#aaa"/><rect x="145.9" y="563.1" width="1.200" height="2.8" fill="#555" fill-opacity=".75"/><rect x="146.2" y="556" width=".6" height="1.500" fill="#aaa"/><rect x="150.9" y="562.3" width="1.200" height="3.6" fill="#555" fill-opacity=".75"/><rect x="151.2" y="556" width=".6" height="1.500" fill="#aaa"/><rect x="155.9" y="562.7" width="1.200" height="3.2" fill="#555" fill-opacity=".75"/><rect x="156.2" y="556" width=".6" height="1.500" fill="#aaa"/><rect x="160.9" y="562.7" width="1.200" height="3.2" fill="#555" fill-opacity=".75"/><rect x="161.2" y="556" width=".6" height="1.500" fill="#aaa"/><rect x="165.9" y="563.1" width="1.200" height="2.8" fill="#555" fill-opacity=".75"/><rect x="166.2" y="556" width=".6" height="1.500" fill="#aaa"/><rect x="170.9" y="563.1" width="1.200" height="2.8" fill="#555" fill-opacity=".75"/><rect x="171.2" y="556" width=".6" height="1.500" fill="#aaa"/><rect x="175.9" y="563.5" width="1.200" height="2.4" fill="#555" fill-opacity=".75"/><rect x="176.2" y="556" width=".6" height="1.500" fill="#aaa"/><rect x="180.9" y="563.5" width="1.200" height="2.4" fill="#555" fill-opacity=".75"/><rect x="181.2" y="556" width=".6" height="1.500" fill="#aaa"/><rect x="128.500" y="568" width="5.500" height="1.200" fill="#444" fill-opacity=".85"/></svg>
<!--LEFT-END-->
<!--CENTER-BEGIN-->
<div class="a" style="left:615px;top:281px;width:634px;height:113px;border:1px solid #e0e0e0;border-radius:5px;background:#fff"></div>
<div class="t" style="left:632px;top:311px;font-size:10.500px;line-height:14px;color:#3a3a3a">Describe what you want to visualize</div>
<div class="t" style="left:632px;top:341px;font-size:14px;line-height:20px;color:#a9a9a9">e.g., What is the distribution of US Gross Earnings across movies?</div>
<div class="a" style="left:632px;top:376px;width:542px;height:1px;background:#8a8a8a"></div>
<svg style="left:1145px;top:342px" width="19" height="19" viewBox="0 0 19 19"><rect x="1" y="16" width="13" height="2.800" fill="#b4b4b4"/><path d="M1.600 7.500L5.600 6.500L10.600 16H3.900z" fill="#b4b4b4"/><circle cx="2.700" cy="4.900" r="2" fill="#fff" stroke="#b4b4b4" stroke-width="1.900"/><path d="M4.500 4.800L10.300 4" stroke="#b4b4b4" stroke-width="2.200" fill="none"/><path d="M17.300 3.600L13.400 .9L10.300 2.800V6.600L13.400 8.900L17.500 6.700" fill="none" stroke="#b4b4b4" stroke-width="1.500" stroke-linejoin="round"/></svg>
<div class="a" style="left:1182px;top:298px;width:1px;height:79px;background:#e0e0e0"></div>
<div class="t" style="left:1191px;top:307px;font-size:10px;line-height:14px;color:#4a4a4a">surprise?</div>
<svg style="left:1195px;top:335px" width="34" height="30" viewBox="1195 335 34 30"><path d="M1202 354.950L1208.960 347.980L1213.980 352.700L1220.100 346.850" fill="none" stroke="#2271c4" stroke-width="1.700" stroke-linejoin="round"/><circle cx="1202" cy="354.950" r="1.950" fill="#2271c4"/><circle cx="1208.960" cy="347.980" r="1.950" fill="#2271c4"/><circle cx="1213.980" cy="352.700" r="1.950" fill="#2271c4"/><circle cx="1220.100" cy="346.850" r="1.950" fill="#2271c4"/><path d="M1214 340.40000000000003L1214.8 342.0L1216.4 342.8L1214.8 343.6L1214 345.2L1213.2 343.6L1211.6 342.8L1213.2 342.0z" fill="#2271c4"/><path d="M1202.5 343.09999999999997L1203.0 344.9L1204.8 345.4L1203.0 345.9L1202.5 347.7L1202.0 345.9L1200.2 345.4L1202.0 344.9z" fill="#3a6f9c"/></svg>
<div class="a" style="left:600px;top:426px;width:52px;height:1px;background:#e0e0e0"></div>
<div class="a" style="left:786px;top:426px;width:479px;height:1px;background:#e0e0e0"></div>
<div class="t" id="sel" style="left:677px;top:419px;font-size:12px;line-height:16px;color:#a6a6a6">Select a chart type</div>
<svg style="left:616px;top:470px" width="41" height="37" viewBox="0 0 41 37"><rect x=".5" y=".5" width="39" height="35" fill="#fff" stroke="#7c7c7c" stroke-width="1"/><rect x=".5" y=".5" width="39" height="7" fill="#c6c6c6" stroke="#7c7c7c" stroke-width="1"/><path d="M.5 16.500H39.500M.5 26.500H39.500M13.500 7.500V35.500M26.500 7.500V35.500" stroke="#7c7c7c" stroke-width="1" fill="none"/></svg>
<div class="t cl" style="left:592px;top:512px">Table</div>
<svg style="left:693px;top:470px" width="36" height="36" viewBox="0 0 36 36"><path d="M.5 .6V34.600H35" fill="none" stroke="#8c8c8c" stroke-width="1.100"/><circle cx="27.8" cy="7.5" r="2.5" fill="#6db6f5" stroke="#4a90d0" stroke-width=".8"/><circle cx="20" cy="19.4" r="2.5" fill="#6db6f5" stroke="#4a90d0" stroke-width=".8"/><circle cx="15.3" cy="9.6" r="2.5" fill="#c6c6c6" stroke="#9a9a9a" stroke-width=".8"/><circle cx="7.7" cy="15.8" r="2.5" fill="#c6c6c6" stroke="#9a9a9a" stroke-width=".8"/><circle cx="9.4" cy="25.6" r="2.5" fill="#c6c6c6" stroke="#9a9a9a" stroke-width=".8"/></svg>
<div class="t cl" style="left:666px;top:512px">Scatter Plot</div>
<svg style="left:767px;top:470px" width="36" height="36" viewBox="0 0 36 36"><path d="M.5 .6V34.600H35" fill="none" stroke="#8c8c8c" stroke-width="1.100"/><circle cx="15.25" cy="9.6" r="2.5" fill="#c6c6c6" stroke="#9a9a9a" stroke-width=".8"/><circle cx="28" cy="7.25" r="2.5" fill="#c6c6c6" stroke="#9a9a9a" stroke-width=".8"/><circle cx="7.6" cy="16" r="2.5" fill="#c6c6c6" stroke="#9a9a9a" stroke-width=".8"/><circle cx="20.1" cy="19.5" r="2.5" fill="#c6c6c6" stroke="#9a9a9a" stroke-width=".8"/><circle cx="9.25" cy="25.4" r="2.5" fill="#c6c6c6" stroke="#9a9a9a" stroke-width=".8"/><path d="M2.400 27.250L31.750 .3" stroke="#4a90d0" stroke-width="1.300"/></svg>
<div class="t cl" style="left:740px;top:512px">Linear<br>Regression</div>
<svg style="left:841px;top:470px" width="36" height="36" viewBox="0 0 36 36"><path d="M.5 .6V34.600H35" fill="none" stroke="#8c8c8c" stroke-width="1.100"/><path d="M14.6 5.25H28.1" stroke="#8c8c8c" stroke-width="1.100"/><circle cx="14.6" cy="5.25" r="2.5" fill="#c6c6c6" stroke="#9a9a9a" stroke-width=".8"/><circle cx="28.1" cy="5.25" r="2.5" fill="#6db6f5" stroke="#4a90d0" stroke-width=".8"/><path d="M10.6 16.1H19.75" stroke="#8c8c8c" stroke-width="1.100"/><circle cx="10.6" cy="16.1" r="2.5" fill="#c6c6c6" stroke="#9a9a9a" stroke-width=".8"/><circle cx="19.75" cy="16.1" r="2.5" fill="#6db6f5" stroke="#4a90d0" stroke-width=".8"/><path d="M8.75 27H25.25" stroke="#8c8c8c" stroke-width="1.100"/><circle cx="8.75" cy="27" r="2.5" fill="#c6c6c6" stroke="#9a9a9a" stroke-width=".8"/><circle cx="25.25" cy="27" r="2.5" fill="#6db6f5" stroke="#4a90d0" stroke-width=".8"/></svg>
<div class="t cl" style="left:814px;top:512px">Ranged Dot<br>Plot</div>
<svg style="left:915px;top:470px" width="36" height="36" viewBox="0 0 36 36"><path d="M.5 .6V34.600H35" fill="none" stroke="#8c8c8c" stroke-width="1.100"/><path d="M8.550 9.400V30.400M4.600 9.400H12.500M4.600 30.400H12.500M23.550 2.100V26.500M19.600 2.100H27.500M19.600 26.500H27.500" stroke="#8c8c8c" stroke-width="1" fill="none"/><rect x="4.60" y="13.10" width="7.90" height="13.80" fill="#c6c6c6" stroke="#9a9a9a" stroke-width="0.9"/><rect x="19.60" y="7.75" width="7.90" height="13.25" fill="#c6c6c6" stroke="#9a9a9a" stroke-width="0.9"/></svg>
<div class="t cl" style="left:888px;top:512px">Boxplot</div>
<svg style="left:989px;top:470px" width="36" height="36" viewBox="0 0 36 36"><rect x="4.90" y="14.20" width="7.70" height="20.40" fill="#6db6f5" stroke="#4a90d0" stroke-width="0.9"/><rect x="19.70" y="2.80" width="8.00" height="31.80" fill="#c6c6c6" stroke="#9a9a9a" stroke-width="0.9"/><path d="M.5 .6V34.600H35" fill="none" stroke="#8c8c8c" stroke-width="1.100"/></svg>
<div class="t cl" style="left:962px;top:512px">Bar Chart</div>
<svg style="left:1063px;top:470px" width="36" height="36" viewBox="0 0 36 36"><rect x="4.90" y="14.20" width="7.70" height="20.40" fill="#6db6f5" stroke="#4a90d0" stroke-width="0.9"/><rect x="19.70" y="2.80" width="8.00" height="31.80" fill="#c6c6c6" stroke="#9a9a9a" stroke-width="0.9"/><path d="M.5 .6V34.600H35" fill="none" stroke="#8c8c8c" stroke-width="1.100"/></svg>
<div class="t cl" style="left:1036px;top:512px">Pyramid Chart</div>
<svg style="left:1137px;top:470px" width="36" height="36" viewBox="0 0 36 36"><rect x="1.20" y="4.65" width="6.50" height="29.95" fill="#6db6f5" stroke="#4a90d0" stroke-width="0.9"/><rect x="7.70" y="16.10" width="7.05" height="18.50" fill="#fff" stroke="#8c8c8c" stroke-width="0.9"/><rect x="19.40" y="19.50" width="6.60" height="15.10" fill="#c6c6c6" stroke="#9a9a9a" stroke-width="0.9"/><rect x="26.00" y="9.60" width="6.60" height="25.00" fill="#fff" stroke="#8c8c8c" stroke-width="0.9"/><path d="M.5 .6V34.600H35" fill="none" stroke="#8c8c8c" stroke-width="1.100"/></svg>
<div class="t cl" style="left:1110px;top:512px">Grouped Bar<br>Chart</div>
<svg style="left:1211px;top:470px" width="36" height="36" viewBox="0 0 36 36"><rect x="4.60" y="13.70" width="7.90" height="12.55" fill="#6db6f5" stroke="#4a90d0" stroke-width="0.9"/><rect x="4.60" y="26.25" width="7.90" height="8.35" fill="#fff" stroke="#8c8c8c" stroke-width="0.9"/><rect x="19.75" y="2.80" width="7.85" height="18.60" fill="#c6c6c6" stroke="#9a9a9a" stroke-width="0.9"/><rect x="19.75" y="21.40" width="7.85" height="13.20" fill="#fff" stroke="#8c8c8c" stroke-width="0.9"/><path d="M.5 .6V34.600H35" fill="none" stroke="#8c8c8c" stroke-width="1.100"/></svg>
<div class="t cl" style="left:1184px;top:512px">Stacked Bar<br>Chart</div>
<svg style="left:619px;top:556px" width="36" height="36" viewBox="0 0 36 36"><rect x="1.60" y="21.10" width="5.60" height="13.50" fill="#6db6f5" stroke="#4a90d0" stroke-width="0.9"/><rect x="8.10" y="12.70" width="5.65" height="21.90" fill="#6db6f5" stroke="#4a90d0" stroke-width="0.9"/><rect x="14.10" y="3.30" width="6.00" height="31.30" fill="#6db6f5" stroke="#4a90d0" stroke-width="0.9"/><rect x="20.70" y="14.90" width="5.20" height="19.70" fill="#6db6f5" stroke="#4a90d0" stroke-width="0.9"/><rect x="26.90" y="25.25" width="5.60" height="9.35" fill="#6db6f5" stroke="#4a90d0" stroke-width="0.9"/><path d="M.1 .9V34.600M-1 34.600H33.800" fill="none" stroke="#8c8c8c" stroke-width="1.100"/></svg>
<div class="t cl" style="left:592px;top:598px">Histogram</div>
<svg style="left:693px;top:556px" width="36" height="36" viewBox="0 0 36 36"><path d="M.5 .6V34.600H35" fill="none" stroke="#8c8c8c" stroke-width="1.100"/><path d="M.5 17.750L13.600 5.600L21.100 18.700L33.900 7.400" fill="none" stroke="#5c5c5c" stroke-width="1.200"/><path d="M.5 24.300L21.700 1.800L33.900 24.700" fill="none" stroke="#4f6f8c" stroke-width="1.200"/></svg>
<div class="t cl" style="left:666px;top:598px">Line Chart</div>
<svg style="left:767px;top:556px" width="36" height="36" viewBox="0 0 36 36"><path d="M.5 .6V34.600H35" fill="none" stroke="#8c8c8c" stroke-width="1.100"/><path d="M.5 18.300L12.400 5.900L21.750 18.700L33.900 7.800" fill="none" stroke="#8c8c8c" stroke-width="1.100"/><path d="M.5 25.250L21.750 1.800L33.900 24.700" fill="none" stroke="#4f78a4" stroke-width="1.100"/><circle cx="0.5" cy="18.3" r="1.7" fill="#c6c6c6" stroke="#9a9a9a" stroke-width=".8"/><circle cx="12.4" cy="5.9" r="1.7" fill="#c6c6c6" stroke="#9a9a9a" stroke-width=".8"/><circle cx="21.75" cy="18.7" r="1.7" fill="#c6c6c6" stroke="#9a9a9a" stroke-width=".8"/><circle cx="33.9" cy="7.8" r="1.7" fill="#c6c6c6" stroke="#9a9a9a" stroke-width=".8"/><circle cx="0.5" cy="25.25" r="1.7" fill="#6db6f5" stroke="#4a90d0" stroke-width=".8"/><circle cx="21.75" cy="1.8" r="1.7" fill="#6db6f5" stroke="#4a90d0" stroke-width=".8"/><circle cx="33.9" cy="24.7" r="1.7" fill="#6db6f5" stroke="#4a90d0" stroke-width=".8"/></svg>
<div class="t cl" style="left:740px;top:598px">Dotted Line<br>Chart</div>
<svg style="left:841px;top:556px" width="36" height="36" viewBox="0 0 36 36"><path d="M.5 .6V34.600H35" fill="none" stroke="#8c8c8c" stroke-width="1.100"/><rect x="2.10" y="3.30" width="8.50" height="7.90" fill="#fff" stroke="#8c8c8c" stroke-width="0.9"/><rect x="12.80" y="3.30" width="8.60" height="7.90" fill="#6db6f5" stroke="#4a90d0" stroke-width="0.9"/><rect x="23.30" y="3.30" width="8.80" height="7.90" fill="#6db6f5" stroke="#4a90d0" stroke-width="0.9"/><rect x="2.10" y="14.00" width="8.50" height="8.00" fill="#6db6f5" stroke="#4a90d0" stroke-width="0.9"/><rect x="12.80" y="14.00" width="8.60" height="8.00" fill="#6db6f5" stroke="#4a90d0" stroke-width="0.9"/><rect x="23.30" y="14.00" width="8.80" height="8.00" fill="#6db6f5" stroke="#4a90d0" stroke-width="0.9"/><rect x="2.10" y="24.70" width="8.50" height="8.05" fill="#c6c6c6" stroke="#8c8c8c" stroke-width="0.9"/><rect x="12.80" y="24.70" width="8.60" height="8.05" fill="#c6c6c6" stroke="#8c8c8c" stroke-width="0.9"/><rect x="23.30" y="24.70" width="8.80" height="8.05" fill="#fff" stroke="#8c8c8c" stroke-width="0.9"/></svg>
<div class="t cl" style="left:814px;top:598px">Heat Map</div>
<svg style="left:915px;top:556px" width="36" height="36" viewBox="0 0 36 36"><circle cx="6.4" cy="7.5" r="6" fill="#c6c6c6" stroke="#9a9a9a" stroke-width=".8"/><rect x="21.60" y="1.90" width="11.90" height="10.90" fill="#c6c6c6" stroke="#9a9a9a" stroke-width="0.9"/><path d="M6.400 20.700L14.700 32H-1.500z" fill="#c6c6c6" stroke="#9a9a9a" stroke-width=".9"/><path d="M27.600 18.100L35.500 26L27.600 33.900L19.700 26z" fill="#c6c6c6" stroke="#9a9a9a" stroke-width=".9"/></svg>
<div class="t cl" style="left:888px;top:598px">Custom Point</div>
<svg style="left:989px;top:556px" width="36" height="36" viewBox="0 0 36 36"><path d="M.1 18.200L11 28.650L24.900 7.900L34.200 18.200" fill="none" stroke="#8c8c8c" stroke-width="1.200"/></svg>
<div class="t cl" style="left:962px;top:598px">Custom Line</div>
<svg style="left:1063px;top:556px" width="36" height="36" viewBox="0 0 36 36"><rect x="2.50" y="21.10" width="12.10" height="12.70" fill="#c6c6c6" stroke="#9a9a9a" stroke-width="0.9"/><rect x="19.80" y="1.90" width="11.85" height="31.90" fill="#c6c6c6" stroke="#9a9a9a" stroke-width="0.9"/></svg>
<div class="t cl" style="left:1036px;top:598px">Custom Bar</div>
<svg style="left:1137px;top:556px" width="36" height="36" viewBox="0 0 36 36"><rect x="11.50" y="0.50" width="11.30" height="35.10" fill="#c6c6c6" stroke="#9a9a9a" stroke-width="0.9"/></svg>
<div class="t cl" style="left:1110px;top:598px">Custom Rect</div>
<svg style="left:1211px;top:556px" width="36" height="36" viewBox="0 0 36 36"><path d="M.5 12.800L11.800 22.700L24.600 1.900L34.100 12.800V35.200H.5z" fill="#c6c6c6" stroke="#9a9a9a" stroke-width=".9"/></svg>
<div class="t cl" style="left:1184px;top:598px">Custom Area</div>
<!--CENTER-END-->
<!--RIGHT-BEGIN-->
<div class="t" style="left:1650px;top:148px;font-size:14px;line-height:20px;color:#6b6b6b">Data Fields</div>
<div class="a" style="left:1650px;top:185px;width:16px;height:1px;background:#dedede"></div>
<div class="a" style="left:1749px;top:185px;width:146px;height:1px;background:#dedede"></div>
<div class="t" style="left:1676px;top:178px;font-size:10px;line-height:14px;color:#6a6a6a">field operators</div>
<div class="a" style="left:1653px;top:195px;width:117px;height:30px;border-radius:5px;background:#fbf3fd;border:1px solid #f4ebf7;border-left:8px solid #9c50c0"></div>
<div class="t" style="left:1667px;top:201px;font-size:13px;line-height:18px;font-style:italic;color:#1e1e1e">count</div>
<div class="a" style="left:1776px;top:195px;width:116px;height:30px;border-radius:5px;background:#fbf3fd;border:1px solid #f4ebf7;border-left:8px solid #9c50c0"></div>
<div class="t" style="left:1790px;top:201px;font-size:13px;line-height:18px;font-style:italic;color:#1e1e1e">sum</div>
<div class="a" style="left:1653px;top:231px;width:117px;height:30px;border-radius:5px;background:#fbf3fd;border:1px solid #f4ebf7;border-left:8px solid #9c50c0"></div>
<div class="t" style="left:1667px;top:237px;font-size:13px;line-height:18px;font-style:italic;color:#1e1e1e">average</div>
<div class="a" style="left:1776px;top:231px;width:116px;height:30px;border-radius:5px;background:#fbf3fd;border:1px solid #f4ebf7;border-left:8px solid #9c50c0"></div>
<div class="t" style="left:1790px;top:237px;font-size:13px;line-height:18px;font-style:italic;color:#1e1e1e">median</div>
<div class="a" style="left:1653px;top:267px;width:117px;height:30px;border-radius:5px;background:#fbf3fd;border:1px solid #f4ebf7;border-left:8px solid #9c50c0"></div>
<div class="t" style="left:1667px;top:273px;font-size:13px;line-height:18px;font-style:italic;color:#1e1e1e">max</div>
<div class="a" style="left:1776px;top:267px;width:116px;height:30px;border-radius:5px;background:#fbf3fd;border:1px solid #f4ebf7;border-left:8px solid #9c50c0"></div>
<div class="t" style="left:1790px;top:273px;font-size:13px;line-height:18px;font-style:italic;color:#1e1e1e">min</div>
<div class="a" style="left:1650px;top:308px;width:16px;height:1px;background:#dedede"></div>
<div class="a" style="left:1754px;top:308px;width:141px;height:1px;background:#dedede"></div>
<div class="t" style="left:1676px;top:301px;font-size:10px;line-height:14px;color:#6a6a6a">new fields</div>
<svg style="left:1732px;top:302px" width="10" height="11" viewBox="0 0 10 11"><path d="M4 .5h2v4h2.500v2h-7v-2H4zM1.500 7.500h7l.8 3H.7z" fill="none" stroke="#666" stroke-width=".9"/></svg>
<div class="a" style="left:1653px;top:319px;width:239px;height:30px;border-radius:5px;background:#fff6ef;border:1px solid #fbeee3;border-left:8px solid #f07c0a"></div>
<div class="t" style="left:1667.6px;top:332px;font-size:7px;line-height:8px;color:#3f86d6">1</div><div class="t" style="left:1671px;top:328px;font-size:7.500px;line-height:8px;color:#3f86d6">2</div><div class="t" style="left:1675px;top:334px;font-size:7.500px;line-height:8px;color:#3f86d6">3</div>
<div class="t" style="left:1684px;top:325px;font-size:13px;line-height:18px;color:#1e1e1e">Profit<span style="font-size:9px;font-style:italic;margin-left:7px;color:#1e1e1e;position:relative;top:-2.500px">-- Range</span></div>
<div class="a" style="left:1650px;top:360px;width:16px;height:1px;background:#dedede"></div>
<div class="a" style="left:1743px;top:360px;width:152px;height:1px;background:#dedede"></div>
<div class="t" style="left:1677px;top:353px;font-size:10px;line-height:14px;color:#6a6a6a">movies</div>
<svg style="left:1725px;top:358px" width="6" height="4" viewBox="0 0 6 4"><path d="M0 0h6L3 4z" fill="#555"/></svg>
<div class="a" style="left:1653px;top:370px;width:239px;height:30px;border-radius:5px;background:#f6f8fe;border:1px solid #f4f6fd;border-left:8px solid #4d8dd2"></div>
<div class="t" style="left:1666.7px;top:383px;font-size:7px;line-height:8px;color:#3f86d6">A</div><div class="t" style="left:1672px;top:378.5px;font-size:6px;line-height:8px;color:#3f86d6">B</div><div class="t" style="left:1673.9px;top:384.5px;font-size:7.500px;line-height:8px;color:#3f86d6">C</div>
<div class="t" style="left:1684px;top:376px;font-size:13px;line-height:18px;color:#1e1e1e">Title<span style="font-size:9px;font-style:italic;margin-left:7px;color:#1e1e1e;position:relative;top:-2.500px">-- String</span></div>
<div class="a" style="left:1653px;top:403px;width:239px;height:30px;border-radius:5px;background:#f6f8fe;border:1px solid #f4f6fd;border-left:8px solid #4d8dd2"></div>
<div class="t" style="left:1667.6px;top:416px;font-size:7px;line-height:8px;color:#3f86d6">1</div><div class="t" style="left:1671px;top:412px;font-size:7.500px;line-height:8px;color:#3f86d6">2</div><div class="t" style="left:1675px;top:418px;font-size:7.500px;line-height:8px;color:#3f86d6">3</div>
<div class="t" style="left:1684px;top:409px;font-size:13px;line-height:18px;color:#1e1e1e">US_Gross<span style="font-size:9px;font-style:italic;margin-left:7px;color:#1e1e1e;position:relative;top:-2.500px">-- Number</span></div>
<div class="a" style="left:1653px;top:436px;width:239px;height:30px;border-radius:5px;background:#f6f8fe;border:1px solid #f4f6fd;border-left:8px solid #4d8dd2"></div>
<div class="t" style="left:1667.6px;top:449px;font-size:7px;line-height:8px;color:#3f86d6">1</div><div class="t" style="left:1671px;top:445px;font-size:7.500px;line-height:8px;color:#3f86d6">2</div><div class="t" style="left:1675px;top:451px;font-size:7.500px;line-height:8px;color:#3f86d6">3</div>
<div class="t" style="left:1684px;top:442px;font-size:13px;line-height:18px;color:#1e1e1e">Worldwide_Gross<span style="font-size:9px;font-style:italic;margin-left:7px;color:#1e1e1e;position:relative;top:-2.500px">-- Number</span></div>
<div class="a" style="left:1653px;top:469px;width:239px;height:30px;border-radius:5px;background:#f6f8fe;border:1px solid #f4f6fd;border-left:8px solid #4d8dd2"></div>
<div class="t" style="left:1667.6px;top:482px;font-size:7px;line-height:8px;color:#3f86d6">1</div><div class="t" style="left:1671px;top:478px;font-size:7.500px;line-height:8px;color:#3f86d6">2</div><div class="t" style="left:1675px;top:484px;font-size:7.500px;line-height:8px;color:#3f86d6">3</div>
<div class="t" style="left:1684px;top:475px;font-size:13px;line-height:18px;color:#1e1e1e">US_DVD_Sales<span style="font-size:9px;font-style:italic;margin-left:7px;color:#1e1e1e;position:relative;top:-2.500px">-- Number</span></div>
<div class="a" style="left:1653px;top:502px;width:239px;height:30px;border-radius:5px;background:#f6f8fe;border:1px solid #f4f6fd;border-left:8px solid #4d8dd2"></div>
<div class="t" style="left:1667.6px;top:515px;font-size:7px;line-height:8px;color:#3f86d6">1</div><div class="t" style="left:1671px;top:511px;font-size:7.500px;line-height:8px;color:#3f86d6">2</div><div class="t" style="left:1675px;top:517px;font-size:7.500px;line-height:8px;color:#3f86d6">3</div>
<div class="t" style="left:1684px;top:508px;font-size:13px;line-height:18px;color:#1e1e1e">Production_Budget<span style="font-size:9px;font-style:italic;margin-left:7px;color:#1e1e1e;position:relative;top:-2.500px">-- Number</span></div>
<div class="a" style="left:1653px;top:535px;width:239px;height:30px;border-radius:5px;background:#f6f8fe;border:1px solid #f4f6fd;border-left:8px solid #4d8dd2"></div>
<svg style="left:1667px;top:544px" width="11" height="11" viewBox="0 0 11 11"><rect x=".5" y="1.500" width="10" height="9" fill="none" stroke="#2f7ed8" stroke-width=".9"/><path d="M.5 4h10" stroke="#2f7ed8" stroke-width=".9"/><path d="M2.500 6h1M5 6h1M7.500 6h1M2.500 8.200h1M5 8.200h1M7.500 8.200h1" stroke="#2f7ed8" stroke-width="1"/></svg>
<div class="t" style="left:1684px;top:541px;font-size:13px;line-height:18px;color:#1e1e1e">Release_Date<span style="font-size:9px;font-style:italic;margin-left:7px;color:#1e1e1e;position:relative;top:-2.500px">-- Date</span></div>
<div class="a" style="left:1653px;top:568px;width:239px;height:30px;border-radius:5px;background:#f6f8fe;border:1px solid #f4f6fd;border-left:8px solid #4d8dd2"></div>
<div class="t" style="left:1666.7px;top:581px;font-size:7px;line-height:8px;color:#3f86d6">A</div><div class="t" style="left:1672px;top:576.5px;font-size:6px;line-height:8px;color:#3f86d6">B</div><div class="t" style="left:1673.9px;top:582.5px;font-size:7.500px;line-height:8px;color:#3f86d6">C</div>
<div class="t" style="left:1684px;top:574px;font-size:13px;line-height:18px;color:#1e1e1e">MPAA_Rating<span style="font-size:9px;font-style:italic;margin-left:7px;color:#1e1e1e;position:relative;top:-2.500px">-- String</span></div>
<div class="a" style="left:1653px;top:601px;width:239px;height:30px;border-radius:5px;background:#f6f8fe;border:1px solid #f4f6fd;border-left:8px solid #4d8dd2"></div>
<div class="t" style="left:1667.6px;top:614px;font-size:7px;line-height:8px;color:#3f86d6">1</div><div class="t" style="left:1671px;top:610px;font-size:7.500px;line-height:8px;color:#3f86d6">2</div><div class="t" style="left:1675px;top:616px;font-size:7.500px;line-height:8px;color:#3f86d6">3</div>
<div class="t" style="left:1684px;top:607px;font-size:13px;line-height:18px;color:#1e1e1e">Running_Time_min<span style="font-size:9px;font-style:italic;margin-left:7px;color:#1e1e1e;position:relative;top:-2.500px">-- Duration</span></div>
<div class="a" style="left:1653px;top:634px;width:239px;height:30px;border-radius:5px;background:#f6f8fe;border:1px solid #f4f6fd;border-left:8px solid #4d8dd2"></div>
<div class="t" style="left:1666.7px;top:647px;font-size:7px;line-height:8px;color:#3f86d6">A</div><div class="t" style="left:1672px;top:642.5px;font-size:6px;line-height:8px;color:#3f86d6">B</div><div class="t" style="left:1673.9px;top:648.5px;font-size:7.500px;line-height:8px;color:#3f86d6">C</div>
<div class="t" style="left:1684px;top:640px;font-size:13px;line-height:18px;color:#1e1e1e">Distributor<span style="font-size:9px;font-style:italic;margin-left:7px;color:#1e1e1e;position:relative;top:-2.500px">-- String</span></div>
<div class="a" style="left:1653px;top:667px;width:239px;height:30px;border-radius:5px;background:#f6f8fe;border:1px solid #f4f6fd;border-left:8px solid #4d8dd2"></div>
<div class="t" style="left:1666.7px;top:680px;font-size:7px;line-height:8px;color:#3f86d6">A</div><div class="t" style="left:1672px;top:675.5px;font-size:6px;line-height:8px;color:#3f86d6">B</div><div class="t" style="left:1673.9px;top:681.5px;font-size:7.500px;line-height:8px;color:#3f86d6">C</div>
<div class="t" style="left:1684px;top:673px;font-size:13px;line-height:18px;color:#1e1e1e">Source<span style="font-size:9px;font-style:italic;margin-left:7px;color:#1e1e1e;position:relative;top:-2.500px">-- String</span></div>
<div class="a" style="left:1653px;top:700px;width:239px;height:30px;border-radius:5px;background:#f6f8fe;border:1px solid #f4f6fd;border-left:8px solid #4d8dd2"></div>
<div class="t" style="left:1666.7px;top:713px;font-size:7px;line-height:8px;color:#3f86d6">A</div><div class="t" style="left:1672px;top:708.5px;font-size:6px;line-height:8px;color:#3f86d6">B</div><div class="t" style="left:1673.9px;top:714.5px;font-size:7.500px;line-height:8px;color:#3f86d6">C</div>
<div class="t" style="left:1684px;top:706px;font-size:13px;line-height:18px;color:#1e1e1e">Major_Genre<span style="font-size:9px;font-style:italic;margin-left:7px;color:#1e1e1e;position:relative;top:-2.500px">-- String</span></div>
<div class="a" style="left:1653px;top:733px;width:239px;height:30px;border-radius:5px;background:#f6f8fe;border:1px solid #f4f6fd;border-left:8px solid #4d8dd2"></div>
<div class="t" style="left:1666.7px;top:746px;font-size:7px;line-height:8px;color:#3f86d6">A</div><div class="t" style="left:1672px;top:741.5px;font-size:6px;line-height:8px;color:#3f86d6">B</div><div class="t" style="left:1673.9px;top:747.5px;font-size:7.500px;line-height:8px;color:#3f86d6">C</div>
<div class="t" style="left:1684px;top:739px;font-size:13px;line-height:18px;color:#1e1e1e">Creative_Type<span style="font-size:9px;font-style:italic;margin-left:7px;color:#1e1e1e;position:relative;top:-2.500px">-- String</span></div>
<div class="a" style="left:1653px;top:766px;width:239px;height:30px;border-radius:5px;background:#f6f8fe;border:1px solid #f4f6fd;border-left:8px solid #4d8dd2"></div>
<div class="t" style="left:1666.7px;top:779px;font-size:7px;line-height:8px;color:#3f86d6">A</div><div class="t" style="left:1672px;top:774.5px;font-size:6px;line-height:8px;color:#3f86d6">B</div><div class="t" style="left:1673.9px;top:780.5px;font-size:7.500px;line-height:8px;color:#3f86d6">C</div>
<div class="t" style="left:1684px;top:772px;font-size:13px;line-height:18px;color:#1e1e1e">Director<span style="font-size:9px;font-style:italic;margin-left:7px;color:#1e1e1e;position:relative;top:-2.500px">-- String</span></div>
<div class="a" style="left:1653px;top:1032px;width:239px;height:30px;border-radius:5px;background:#f5f7fd;border:1px solid #f3f5fc;border-left:8px solid #4d8dd2"></div>
<div class="a" style="left:1653px;top:1065px;width:239px;height:30px;border-radius:5px;background:#f5f7fd;border:1px solid #f3f5fc;border-left:8px solid #4d8dd2"></div>
<svg style="left:1898px;top:182px" width="10" height="7" viewBox="0 0 10 7"><path d="M5 0l5 7H0z" fill="#8f8f8f"/></svg>
<div class="a" style="left:1898px;top:195px;width:9px;height:721px;border-radius:4.500px;background:#8f8f8f"></div>
<svg style="left:1898px;top:1059px" width="10" height="7" viewBox="0 0 10 7"><path d="M0 0h10L5 7z" fill="#8f8f8f"/></svg>
<div class="a" style="left:1862px;top:973px;width:62px;height:62px;border-radius:31px;background:radial-gradient(circle,rgba(255,255,255,0) 14px,rgba(250,190,150,.55) 21px,rgba(250,200,170,.25) 27px,rgba(255,255,255,0) 31px)"></div>
<div class="a" style="left:1884px;top:995px;width:16px;height:18px;border-radius:3px;background:#c4600f"></div>
<div class="a" style="left:1884px;top:1035px;width:18px;height:18px;border-radius:9px;background:#6a6a6a"></div>
<!--RIGHT-END-->
<!--TABLE-BEGIN-->
<svg style="left:234px;top:784px" width="12" height="12" viewBox="0 0 24 24"><path fill="#8a8a8a" d="M17 15l1.550 1.550c-.96 1.690-3.330 3.040-5.550 3.370V11h3V9h-3V7.820C14.160 7.400 15 6.300 15 5c0-1.650-1.350-3-3-3S9 3.350 9 5c0 1.300.84 2.400 2 2.820V9H8v2h3v8.920c-2.220-.33-4.590-1.680-5.550-3.370L7 15l-4-3v3c0 3.880 4.920 7 9 7s9-3.120 9-7v-3l-4 3zM12 4c.55 0 1 .45 1 1s-.45 1-1 1-1-.45-1-1 .45-1 1-1z"/></svg>
<div class="t" style="left:259px;top:782px;font-size:12px;line-height:16px;color:#2673c6;font-weight:bold">movies</div>
<svg style="left:321px;top:784px" width="12" height="12" viewBox="0 0 12 12"><path d="M6 0l4 5H8.200l3 4H7v3H5V9H.8l3-4H2z" fill="#777"/></svg>
<div class="t" style="left:346px;top:782px;font-size:12px;line-height:16px;color:#2673c6">table-15</div>
<div class="a" style="left:225px;top:804px;width:1272px;height:45px;background:#fff"></div>
<div class="a" style="left:225px;top:849px;width:65px;height:2px;background:#2e6f9e"></div>
<div class="t" style="left:231.5px;top:824.5px;font-size:7.500px;line-height:8px;color:#4c4c4c">1</div><div class="t" style="left:235px;top:820.5px;font-size:7.500px;line-height:8px;color:#4c4c4c">2</div><div class="t" style="left:239px;top:826px;font-size:7.500px;line-height:8px;color:#4c4c4c">3</div>
<div class="t" style="left:248px;top:819px;font-size:12px;line-height:16px;font-weight:bold;color:#3a3a3a">#</div>
<div class="a" style="left:292px;top:849px;width:151px;height:2px;background:#2e6f9e"></div>
<div class="t" style="left:300.9px;top:824px;font-size:8px;line-height:8px;color:#4c4c4c">A</div><div class="t" style="left:306px;top:819.2px;font-size:7.500px;line-height:8px;color:#4c4c4c">B</div><div class="t" style="left:308.3px;top:826px;font-size:8px;line-height:8px;color:#4c4c4c">C</div>
<div class="t" style="left:318px;top:819px;font-size:12px;line-height:16px;font-weight:bold;color:#3a3a3a">Title</div>
<div class="a" style="left:445px;top:849px;width:115px;height:2px;background:#2e6f9e"></div>
<div class="t" style="left:455.5px;top:824.5px;font-size:7.500px;line-height:8px;color:#4c4c4c">1</div><div class="t" style="left:459px;top:820.5px;font-size:7.500px;line-height:8px;color:#4c4c4c">2</div><div class="t" style="left:463px;top:826px;font-size:7.500px;line-height:8px;color:#4c4c4c">3</div>
<div class="t" style="left:472px;top:819px;font-size:12px;line-height:16px;font-weight:bold;color:#3a3a3a">US_Gross</div>
<div class="a" style="left:563px;top:849px;width:167px;height:2px;background:#2e6f9e"></div>
<div class="t" style="left:573.5px;top:824.5px;font-size:7.500px;line-height:8px;color:#4c4c4c">1</div><div class="t" style="left:577px;top:820.5px;font-size:7.500px;line-height:8px;color:#4c4c4c">2</div><div class="t" style="left:581px;top:826px;font-size:7.500px;line-height:8px;color:#4c4c4c">3</div>
<div class="t" style="left:590px;top:819px;font-size:12px;line-height:16px;font-weight:bold;color:#3a3a3a">Worldwide_Gross</div>
<div class="a" style="left:733px;top:849px;width:144px;height:2px;background:#2e6f9e"></div>
<div class="t" style="left:743.5px;top:824.5px;font-size:7.500px;line-height:8px;color:#4c4c4c">1</div><div class="t" style="left:747px;top:820.5px;font-size:7.500px;line-height:8px;color:#4c4c4c">2</div><div class="t" style="left:751px;top:826px;font-size:7.500px;line-height:8px;color:#4c4c4c">3</div>
<div class="t" style="left:760px;top:819px;font-size:12px;line-height:16px;font-weight:bold;color:#3a3a3a">US_DVD_Sal...</div>
<div class="a" style="left:879px;top:849px;width:184px;height:2px;background:#2e6f9e"></div>
<div class="t" style="left:889.5px;top:824.5px;font-size:7.500px;line-height:8px;color:#4c4c4c">1</div><div class="t" style="left:893px;top:820.5px;font-size:7.500px;line-height:8px;color:#4c4c4c">2</div><div class="t" style="left:897px;top:826px;font-size:7.500px;line-height:8px;color:#4c4c4c">3</div>
<div class="t" style="left:906px;top:819px;font-size:12px;line-height:16px;font-weight:bold;color:#3a3a3a">Production_Budget</div>
<div class="a" style="left:1065px;top:849px;width:143px;height:2px;background:#2e6f9e"></div>
<svg style="left:1075px;top:821px" width="12" height="11" viewBox="0 0 12 11"><rect x=".5" y="1.500" width="11" height="9" fill="none" stroke="#4c4c4c" stroke-width=".9"/><path d="M.5 4h11" stroke="#4c4c4c" stroke-width=".9"/><path d="M2.500 6h1.200M5.400 6h1.200M8.300 6h1.200M2.500 8.200h1.200M5.400 8.200h1.200M8.300 8.200h1.200" stroke="#4c4c4c" stroke-width="1"/></svg>
<div class="t" style="left:1092px;top:819px;font-size:12px;line-height:16px;font-weight:bold;color:#3a3a3a">Release_Date</div>
<div class="a" style="left:1210px;top:849px;width:136px;height:2px;background:#2e6f9e"></div>
<div class="t" style="left:1219.9px;top:824px;font-size:8px;line-height:8px;color:#4c4c4c">A</div><div class="t" style="left:1225px;top:819.2px;font-size:7.500px;line-height:8px;color:#4c4c4c">B</div><div class="t" style="left:1227.3px;top:826px;font-size:8px;line-height:8px;color:#4c4c4c">C</div>
<div class="t" style="left:1237px;top:819px;font-size:12px;line-height:16px;font-weight:bold;color:#3a3a3a">MPAA_Rati...</div>
<div class="a" style="left:1348px;top:849px;width:149px;height:2px;background:#2e6f9e"></div>
<div class="t" style="left:1359.5px;top:824.5px;font-size:7.500px;line-height:8px;color:#4c4c4c">1</div><div class="t" style="left:1363px;top:820.5px;font-size:7.500px;line-height:8px;color:#4c4c4c">2</div><div class="t" style="left:1367px;top:826px;font-size:7.500px;line-height:8px;color:#4c4c4c">3</div>
<div class="t" style="left:1376px;top:819px;font-size:12px;line-height:16px;font-weight:bold;color:#3a3a3a">Running_Time_min</div>
<div class="a" style="left:225px;top:855px;width:1414px;height:23px;background:#fdfdfd;border-bottom:1px solid #e4e4e4"></div>
<div class="t" style="left:241px;top:858px;font-size:12px;line-height:16px;color:#303030">0</div>
<div class="t" style="left:308px;top:858px;font-size:12px;line-height:16px;color:#303030">The Land Girls</div>
<div class="t" style="left:461px;top:858px;font-size:12px;line-height:16px;color:#303030">146083</div>
<div class="t" style="left:579px;top:858px;font-size:12px;line-height:16px;color:#303030">146083</div>
<div class="t" style="left:749px;top:858px;font-size:12px;line-height:16px;color:#303030">null</div>
<div class="t" style="left:896px;top:858px;font-size:12px;line-height:16px;color:#303030">8000000</div>
<div class="t" style="left:1081px;top:858px;font-size:12px;line-height:16px;color:#303030">Jun 12 1998</div>
<div class="t" style="left:1227px;top:858px;font-size:12px;line-height:16px;color:#303030">R</div>
<div class="t" style="left:1365px;top:858px;font-size:12px;line-height:16px;color:#303030">null</div>
<div class="a" style="left:225px;top:878px;width:1414px;height:23px;background:#f8f8f8;border-bottom:1px solid #e4e4e4"></div>
<div class="t" style="left:241px;top:881px;font-size:12px;line-height:16px;color:#303030">1</div>
<div class="t" style="left:308px;top:881px;font-size:12px;line-height:16px;color:#303030">First Love, Last Rites</div>
<div class="t" style="left:461px;top:881px;font-size:12px;line-height:16px;color:#303030">10876</div>
<div class="t" style="left:579px;top:881px;font-size:12px;line-height:16px;color:#303030">10876</div>
<div class="t" style="left:749px;top:881px;font-size:12px;line-height:16px;color:#303030">null</div>
<div class="t" style="left:896px;top:881px;font-size:12px;line-height:16px;color:#303030">300000</div>
<div class="t" style="left:1081px;top:881px;font-size:12px;line-height:16px;color:#303030">Aug 07 1998</div>
<div class="t" style="left:1227px;top:881px;font-size:12px;line-height:16px;color:#303030">R</div>
<div class="t" style="left:1365px;top:881px;font-size:12px;line-height:16px;color:#303030">null</div>
<div class="a" style="left:225px;top:901px;width:1414px;height:23px;background:#fdfdfd;border-bottom:1px solid #e4e4e4"></div>
<div class="t" style="left:241px;top:904px;font-size:12px;line-height:16px;color:#303030">2</div>
<div class="t" style="left:308px;top:904px;font-size:12px;line-height:16px;color:#303030">I Married a Strange Perso</div>
<div class="t" style="left:461px;top:904px;font-size:12px;line-height:16px;color:#303030">203134</div>
<div class="t" style="left:579px;top:904px;font-size:12px;line-height:16px;color:#303030">203134</div>
<div class="t" style="left:749px;top:904px;font-size:12px;line-height:16px;color:#303030">null</div>
<div class="t" style="left:896px;top:904px;font-size:12px;line-height:16px;color:#303030">250000</div>
<div class="t" style="left:1081px;top:904px;font-size:12px;line-height:16px;color:#303030">Aug 28 1998</div>
<div class="t" style="left:1227px;top:904px;font-size:12px;line-height:16px;color:#303030">null</div>
<div class="t" style="left:1365px;top:904px;font-size:12px;line-height:16px;color:#303030">null</div>
<div class="a" style="left:225px;top:924px;width:1414px;height:23px;background:#f8f8f8;border-bottom:1px solid #e4e4e4"></div>
<div class="t" style="left:241px;top:927px;font-size:12px;line-height:16px;color:#303030">3</div>
<div class="t" style="left:308px;top:927px;font-size:12px;line-height:16px;color:#303030">Let's Talk About Sex</div>
<div class="t" style="left:461px;top:927px;font-size:12px;line-height:16px;color:#303030">373615</div>
<div class="t" style="left:579px;top:927px;font-size:12px;line-height:16px;color:#303030">373615</div>
<div class="t" style="left:749px;top:927px;font-size:12px;line-height:16px;color:#303030">null</div>
<div class="t" style="left:896px;top:927px;font-size:12px;line-height:16px;color:#303030">300000</div>
<div class="t" style="left:1081px;top:927px;font-size:12px;line-height:16px;color:#303030">Sep 11 1998</div>
<div class="t" style="left:1227px;top:927px;font-size:12px;line-height:16px;color:#303030">null</div>
<div class="t" style="left:1365px;top:927px;font-size:12px;line-height:16px;color:#303030">null</div>
<div class="a" style="left:225px;top:947px;width:1414px;height:23px;background:#fdfdfd;border-bottom:1px solid #e4e4e4"></div>
<div class="t" style="left:241px;top:950px;font-size:12px;line-height:16px;color:#303030">4</div>
<div class="t" style="left:308px;top:950px;font-size:12px;line-height:16px;color:#303030">Slam</div>
<div class="t" style="left:461px;top:950px;font-size:12px;line-height:16px;color:#303030">1009819</div>
<div class="t" style="left:579px;top:950px;font-size:12px;line-height:16px;color:#303030">1087521</div>
<div class="t" style="left:749px;top:950px;font-size:12px;line-height:16px;color:#303030">null</div>
<div class="t" style="left:896px;top:950px;font-size:12px;line-height:16px;color:#303030">1000000</div>
<div class="t" style="left:1081px;top:950px;font-size:12px;line-height:16px;color:#303030">Oct 09 1998</div>
<div class="t" style="left:1227px;top:950px;font-size:12px;line-height:16px;color:#303030">R</div>
<div class="t" style="left:1365px;top:950px;font-size:12px;line-height:16px;color:#303030">null</div>
<div class="a" style="left:225px;top:970px;width:1414px;height:23px;background:#f8f8f8;border-bottom:1px solid #e4e4e4"></div>
<div class="t" style="left:241px;top:973px;font-size:12px;line-height:16px;color:#303030">5</div>
<div class="t" style="left:308px;top:973px;font-size:12px;line-height:16px;color:#303030">Mississippi Mermaid</div>
<div class="t" style="left:461px;top:973px;font-size:12px;line-height:16px;color:#303030">24551</div>
<div class="t" style="left:579px;top:973px;font-size:12px;line-height:16px;color:#303030">2624551</div>
<div class="t" style="left:749px;top:973px;font-size:12px;line-height:16px;color:#303030">null</div>
<div class="t" style="left:896px;top:973px;font-size:12px;line-height:16px;color:#303030">1600000</div>
<div class="t" style="left:1081px;top:973px;font-size:12px;line-height:16px;color:#303030">Jan 15 1999</div>
<div class="t" style="left:1227px;top:973px;font-size:12px;line-height:16px;color:#303030">null</div>
<div class="t" style="left:1365px;top:973px;font-size:12px;line-height:16px;color:#303030">null</div>
<div class="a" style="left:225px;top:993px;width:1414px;height:23px;background:#fdfdfd;border-bottom:1px solid #e4e4e4"></div>
<div class="t" style="left:241px;top:996px;font-size:12px;line-height:16px;color:#303030">6</div>
<div class="t" style="left:308px;top:996px;font-size:12px;line-height:16px;color:#303030">Following</div>
<div class="t" style="left:461px;top:996px;font-size:12px;line-height:16px;color:#303030">44705</div>
<div class="t" style="left:579px;top:996px;font-size:12px;line-height:16px;color:#303030">44705</div>
<div class="t" style="left:749px;top:996px;font-size:12px;line-height:16px;color:#303030">null</div>
<div class="t" style="left:896px;top:996px;font-size:12px;line-height:16px;color:#303030">6000</div>
<div class="t" style="left:1081px;top:996px;font-size:12px;line-height:16px;color:#303030">Apr 04 1999</div>
<div class="t" style="left:1227px;top:996px;font-size:12px;line-height:16px;color:#303030">R</div>
<div class="t" style="left:1365px;top:996px;font-size:12px;line-height:16px;color:#303030">null</div>
<div class="a" style="left:225px;top:1016px;width:1414px;height:23px;background:#f8f8f8;border-bottom:1px solid #e4e4e4"></div>
<div class="t" style="left:241px;top:1019px;font-size:12px;line-height:16px;color:#303030">7</div>
<div class="t" style="left:308px;top:1019px;font-size:12px;line-height:16px;color:#303030">Foolish</div>
<div class="t" style="left:461px;top:1019px;font-size:12px;line-height:16px;color:#303030">6026908</div>
<div class="t" style="left:579px;top:1019px;font-size:12px;line-height:16px;color:#303030">6026908</div>
<div class="t" style="left:749px;top:1019px;font-size:12px;line-height:16px;color:#303030">null</div>
<div class="t" style="left:896px;top:1019px;font-size:12px;line-height:16px;color:#303030">1600000</div>
<div class="t" style="left:1081px;top:1019px;font-size:12px;line-height:16px;color:#303030">Apr 09 1999</div>
<div class="t" style="left:1227px;top:1019px;font-size:12px;line-height:16px;color:#303030">R</div>
<div class="t" style="left:1365px;top:1019px;font-size:12px;line-height:16px;color:#303030">null</div>
<div class="a" style="left:225px;top:1039px;width:1414px;height:23px;background:#fdfdfd;border-bottom:1px solid #e4e4e4"></div>
<div class="t" style="left:241px;top:1042px;font-size:12px;line-height:16px;color:#303030">8</div>
<div class="t" style="left:308px;top:1042px;font-size:12px;line-height:16px;color:#303030">Pirates</div>
<div class="t" style="left:461px;top:1042px;font-size:12px;line-height:16px;color:#303030">1641825</div>
<div class="t" style="left:579px;top:1042px;font-size:12px;line-height:16px;color:#303030">6341825</div>
<div class="t" style="left:749px;top:1042px;font-size:12px;line-height:16px;color:#303030">null</div>
<div class="t" style="left:896px;top:1042px;font-size:12px;line-height:16px;color:#303030">40000000</div>
<div class="t" style="left:1081px;top:1042px;font-size:12px;line-height:16px;color:#303030">Jul 01 1986</div>
<div class="t" style="left:1227px;top:1042px;font-size:12px;line-height:16px;color:#303030">R</div>
<div class="t" style="left:1365px;top:1042px;font-size:12px;line-height:16px;color:#303030">null</div>
<div class="a" style="left:225px;top:1062px;width:1414px;height:18px;background:#fafafa"></div>
<svg style="left:229px;top:1067px" width="7" height="10" viewBox="0 0 7 10"><path d="M7 0v10L0 5z" fill="#8f8f8f"/></svg>
<div class="a" style="left:243px;top:1068px;width:746px;height:9px;border-radius:4.500px;background:#8f8f8f"></div>
<div class="a" style="left:1476px;top:1035px;width:163px;height:45px;border-radius:8px 0 0 0;background:#fff;box-shadow:0 0 4px rgba(0,0,0,.15)"></div>
<svg style="left:1492px;top:1051px" width="7" height="12" viewBox="0 0 7 12"><path d="M6 1L1 6l5 5" fill="none" stroke="#2673c6" stroke-width="1.600"/></svg>
<div class="t" style="left:1516px;top:1049px;font-size:12px;line-height:16px;color:#777">3201 rows</div>
<svg style="left:1587px;top:1050px" width="12" height="14" viewBox="0 0 12 14"><path d="M3.500 0h5v5H12L6 11 0 5h3.500z" fill="#2673c6"/><path d="M0 13h12" stroke="#2673c6" stroke-width="1.600"/></svg>
<svg style="left:1628px;top:1055px" width="7" height="5" viewBox="0 0 7 5"><path d="M0 0h7L3.500 5z" fill="#777"/></svg>
<!--TABLE-END-->
<!--POPUP-BEGIN-->
<div class="a" style="left:1497px;top:771px;width:398px;height:285px;border-radius:5px;background:#fff;box-shadow:0 3px 10px rgba(0,0,0,.28),0 0 3px rgba(0,0,0,.18)"></div>
<div class="t" style="left:1513px;top:786px;font-size:12px;line-height:16px;color:#666">Visualization challenges for <span style="color:#2673c6;font-weight:bold">movies</span></div>
<svg style="left:1858px;top:788px" width="12" height="12" viewBox="0 0 12 12"><path d="M1 1l10 10M11 1L1 11" stroke="#555" stroke-width="1.300"/></svg>
<div class="t" style="left:1533px;top:809px;font-size:12px;line-height:18px;color:#3b8a4b">[easy] Create a scatter plot to show the relationship between<br>budget and worldwide gross.</div>
<svg style="left:1514px;top:820.5px" width="13" height="13" viewBox="0 0 13 13"><path d="M13 0V13H0z" fill="#b9d8bf"/><path d="M0 13L4.9 8.1V13z" fill="#2f7d3e"/></svg>
<div class="t" style="left:1533px;top:853px;font-size:12px;line-height:18px;color:#3b8a4b">[easy] Find the top 10 movies with highest profit after 2000 and<br>visualize them in a bar chart.</div>
<svg style="left:1514px;top:864.5px" width="13" height="13" viewBox="0 0 13 13"><path d="M13 0V13H0z" fill="#b9d8bf"/><path d="M0 13L4.9 8.1V13z" fill="#2f7d3e"/></svg>
<div class="t" style="left:1533px;top:897px;font-size:12px;line-height:18px;color:#c2650f">[medium] Visualize the median profit ratio of movies in each<br>genre</div>
<svg style="left:1514px;top:908.5px" width="13" height="13" viewBox="0 0 13 13"><path d="M13 0V13H0z" fill="#f3cdb0"/><path d="M0 13L7.2 5.8V13z" fill="#c7600c"/></svg>
<div class="t" style="left:1533px;top:941px;font-size:12px;line-height:18px;color:#c2650f">[medium] Create a scatter plot to show the relationship between<br>profit and IMDB rating.</div>
<svg style="left:1514px;top:952.5px" width="13" height="13" viewBox="0 0 13 13"><path d="M13 0V13H0z" fill="#f3cdb0"/><path d="M0 13L7.2 5.8V13z" fill="#c7600c"/></svg>
<div class="t" style="left:1533px;top:985px;font-size:12px;line-height:18px;color:#c4314b">[hard] Turn the above plot into a heatmap by bucketing IMDB<br>rating and profit, color tiles by the number of movies in each<br>bucket.</div>
<svg style="left:1514px;top:1005.5px" width="13" height="13" viewBox="0 0 13 13"><path d="M13 0V13H0z" fill="#f3bcc4"/><path d="M0 13L9.4 3.6V13z" fill="#cf2f45"/></svg>
<!--POPUP-END-->
<!--CURSOR-BEGIN-->
<svg style="left:620px;top:390px" width="120" height="130" viewBox="620 390 120 130"><defs><filter id="cs" x="-40%" y="-30%" width="180%" height="160%"><feGaussianBlur stdDeviation="3.600"/></filter></defs><path d="M672.600 406.200L710.300 467.800L690.800 464.800L695.300 491.500Q694 496.600 688.500 496.500Q682.800 496.400 681.100 491.900L675.300 466.400L655 474.900Z" transform="translate(-7,5)" fill="#000" fill-opacity=".5" stroke="#000" stroke-opacity=".5" stroke-width="4" stroke-linejoin="round" filter="url(#cs)"/><path d="M672.600 406.200L710.300 467.800L690.800 464.800L695.300 491.500Q694 496.600 688.500 496.500Q682.800 496.400 681.100 491.900L675.300 466.400L655 474.900Z" fill="#f6f5f8" stroke="#000" stroke-width="3.500" stroke-linejoin="round"/></svg>
<!--CURSOR-END-->
</body>
</html>
